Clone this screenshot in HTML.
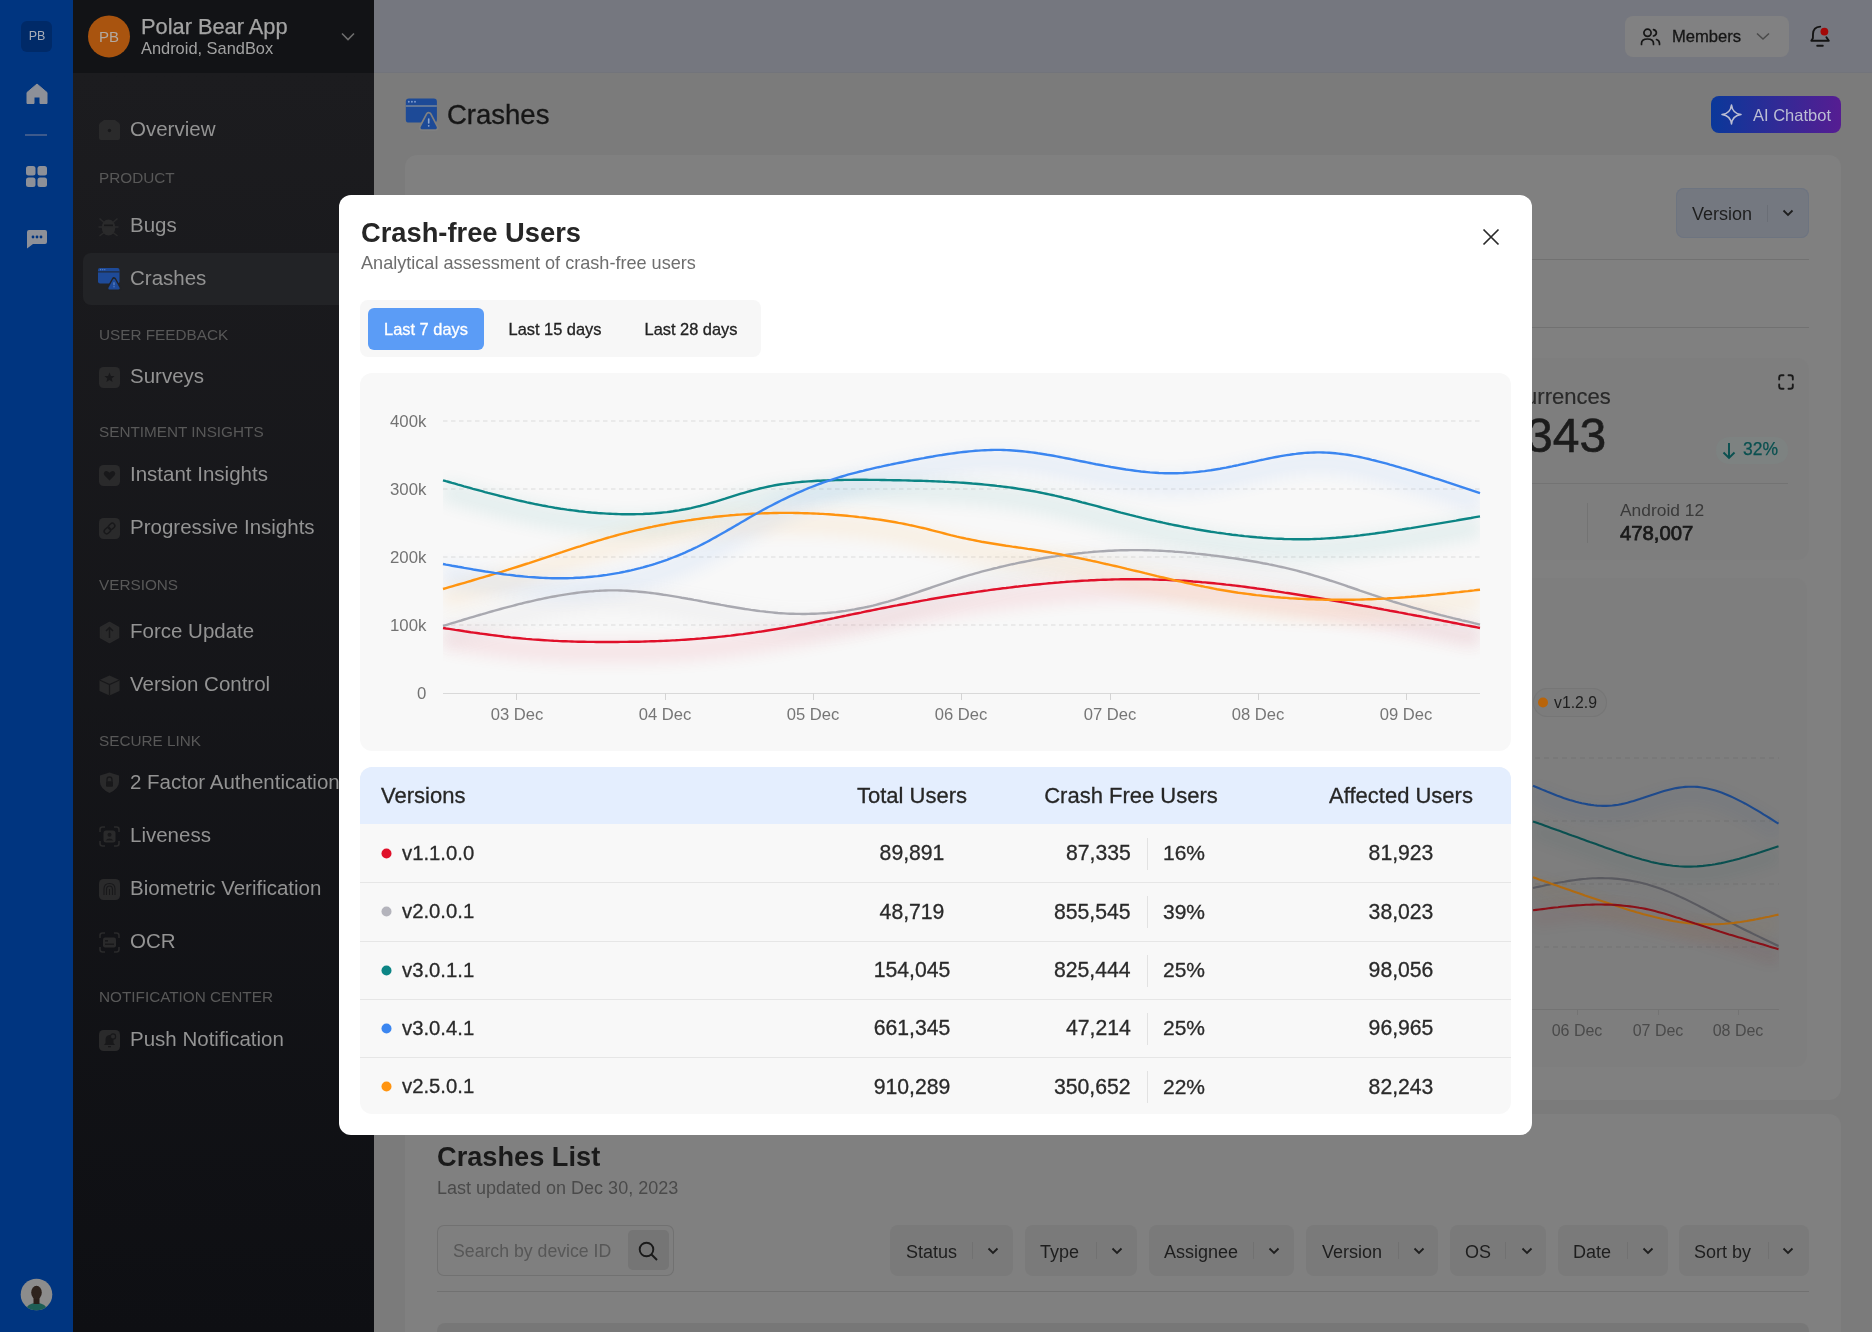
<!DOCTYPE html><html><head><meta charset="utf-8"><style>
html,body{margin:0;padding:0;width:1872px;height:1332px;overflow:hidden;position:relative;font-family:"Liberation Sans",sans-serif;background:#7b7b7b}
.t{position:absolute;white-space:nowrap;line-height:1;will-change:transform}
svg{overflow:visible}
</style></head><body>
<div style="position:absolute;left:0px;top:0px;width:73px;height:1332px;background:#003580;border-radius:0px;"></div>
<div style="position:absolute;left:21px;top:21px;width:31px;height:31px;background:#002a68;border-radius:6px;"></div>
<div class="t" style="left:36.5px;transform:translateX(-50%);top:30.4px;font-size:12.5px;color:#a8adb8;font-weight:400;letter-spacing:0px;">PB</div>
<svg style="position:absolute;left:26px;top:83px;" width="22" height="22" viewBox="0 0 22 22"><path d="M11,1 L21,9.5 L21,20.5 L14,20.5 L14,14 L8,14 L8,20.5 L1,20.5 L1,9.5 Z" fill="#8d9098" stroke="#8d9098" stroke-width="1" stroke-linejoin="round"/></svg>
<div style="position:absolute;left:25px;top:134px;width:22px;height:1.5px;background:#3d5a8c;border-radius:0px;"></div>
<svg style="position:absolute;left:26px;top:166px;" width="22" height="22" viewBox="0 0 22 22"><rect x="0" y="0" width="9.5" height="9.5" rx="2.5" fill="#8d9098"/><rect x="0" y="11.5" width="9.5" height="9.5" rx="2.5" fill="#8d9098"/><rect x="11.5" y="0" width="9.5" height="9.5" rx="2.5" fill="#8d9098"/><rect x="11.5" y="11.5" width="9.5" height="9.5" rx="2.5" fill="#8d9098"/></svg>
<svg style="position:absolute;left:26px;top:229px;" width="22" height="20" viewBox="0 0 22 20"><path d="M3,1 H19 Q21,1 21,3 V13 Q21,15 19,15 H7 L1,19.5 V3 Q1,1 3,1 Z" fill="#8d9098"/><circle cx="7" cy="8" r="1.4" fill="#003580"/><circle cx="11" cy="8" r="1.4" fill="#003580"/><circle cx="15" cy="8" r="1.4" fill="#003580"/></svg>
<svg style="position:absolute;left:20px;top:1278px;" width="33" height="33" viewBox="0 0 33 33"><defs><clipPath id="av"><circle cx="16.5" cy="16.5" r="15.8"/></clipPath></defs><g clip-path="url(#av)"><rect width="33" height="33" fill="#8c8c8c"/><path d="M5,33 Q7,25 16.5,25 Q26,25 28,33 Z" fill="#1d5e55"/><rect x="13.5" y="20" width="6" height="6" fill="#2a1f1a"/><ellipse cx="16.5" cy="14.5" rx="5.3" ry="6.8" fill="#2e231d"/></g></svg>
<div style="position:absolute;left:73px;top:0px;width:301px;height:73px;background:#121316;border-radius:0px;"></div>
<div style="position:absolute;left:73px;top:73px;width:301px;height:1259px;background:linear-gradient(#1c1c1f,#0e0f13);border-radius:0px;"></div>
<svg style="position:absolute;left:88px;top:15px;" width="43" height="43" viewBox="0 0 43 43"><circle cx="21" cy="21.4" r="21" fill="#a9540f"/></svg>
<div class="t" style="left:109.0px;transform:translateX(-50%);top:29.3px;font-size:15px;color:#b3aaa2;font-weight:400;letter-spacing:0px;">PB</div>
<div class="t" style="left:140.5px;top:16.3px;font-size:21.8px;color:#a4a4a4;font-weight:400;letter-spacing:0px;-webkit-text-stroke:0.25px #a4a4a4;">Polar Bear App</div>
<div class="t" style="left:140.5px;top:40.1px;font-size:16.4px;color:#a2a2a2;font-weight:400;letter-spacing:0px;">Android, SandBox</div>
<svg style="position:absolute;left:340px;top:30px;" width="16" height="12" viewBox="0 0 16 12"><path d="M2,3.5 L8,9.5 L14,3.5" fill="none" stroke="#6e6e6e" stroke-width="1.6"/></svg>
<div style="position:absolute;left:83px;top:253px;width:290px;height:52px;background:#222326;border-radius:8px;"></div>
<div class="t" style="left:130.3px;top:119.1px;font-size:20.5px;color:#939393;font-weight:400;letter-spacing:0px;">Overview</div>
<svg style="position:absolute;left:98.8px;top:119.80000000000001px;" width="21" height="21" viewBox="0 0 21 21"><path d="M0,5 Q0,3.5 1.5,2.5 L5,0 H16 L19.5,2.5 Q21,3.5 21,5 V18 Q21,20 19,20 H2 Q0,20 0,18 Z" fill="#2a2a2b"/><circle cx="10.5" cy="10.5" r="1.7" fill="#18181a"/></svg>
<div class="t" style="left:99.3px;top:170.3px;font-size:15.3px;color:#585858;font-weight:400;letter-spacing:0px;">PRODUCT</div>
<div class="t" style="left:130.3px;top:215.1px;font-size:20.5px;color:#939393;font-weight:400;letter-spacing:0px;">Bugs</div>
<svg style="position:absolute;left:98px;top:215.8px;" width="22" height="22" viewBox="0 0 22 22"><ellipse cx="10.5" cy="11.5" rx="6.8" ry="8" fill="#2a2a2b"/><path d="M0.5,11 H20.5 M1.5,2.5 L6,6.5 M19.5,2.5 L15,6.5 M1.5,20 L6,16.5 M19.5,20 L15,16.5" stroke="#2a2a2b" stroke-width="1.5"/><rect x="6" y="8.5" width="9" height="1.6" fill="#18181a"/></svg>
<div class="t" style="left:130.3px;top:268.3px;font-size:20.5px;color:#939393;font-weight:400;letter-spacing:0px;">Crashes</div>
<svg style="position:absolute;left:98px;top:268.0px;" width="23" height="23" viewBox="0 0 23 23"><rect x="0" y="0" width="21.5" height="15.5" rx="2" fill="#1e4a98"/><rect x="0" y="3.4" width="21.5" height="1" fill="#222326"/><circle cx="2.6" cy="1.7" r="0.6" fill="#5f86c9"/><circle cx="4.7" cy="1.7" r="0.6" fill="#5f86c9"/><circle cx="6.8" cy="1.7" r="0.6" fill="#5f86c9"/><path d="M16,11.5 L21,20.5 H11 Z" fill="#222326" stroke="#222326" stroke-width="4.6" stroke-linejoin="round"/><path d="M16,12 L20.5,20.3 H11.5 Z" fill="#1e4a98" stroke="#1e4a98" stroke-width="2.4" stroke-linejoin="round"/><rect x="15.4" y="14.3" width="1.2" height="3" fill="#5f86c9"/><rect x="15.4" y="18.2" width="1.2" height="1.1" fill="#5f86c9"/></svg>
<div class="t" style="left:99.3px;top:326.5px;font-size:15.3px;color:#585858;font-weight:400;letter-spacing:0px;">USER FEEDBACK</div>
<div class="t" style="left:130.3px;top:366.3px;font-size:20.5px;color:#939393;font-weight:400;letter-spacing:0px;">Surveys</div>
<svg style="position:absolute;left:98.8px;top:367.0px;" width="21" height="21" viewBox="0 0 21 21"><rect x="0" y="0" width="21" height="21" rx="4.5" fill="#2a2a2b"/><path d="M10.5,5.5 L11.9,8.9 L15.5,9.1 L12.7,11.4 L13.6,14.9 L10.5,13 L7.4,14.9 L8.3,11.4 L5.5,9.1 L9.1,8.9 Z" fill="#18181a"/></svg>
<div class="t" style="left:99.3px;top:424.1px;font-size:15.3px;color:#585858;font-weight:400;letter-spacing:0px;">SENTIMENT INSIGHTS</div>
<div class="t" style="left:130.3px;top:464.2px;font-size:20.5px;color:#939393;font-weight:400;letter-spacing:0px;">Instant Insights</div>
<svg style="position:absolute;left:98.8px;top:464.90000000000003px;" width="21" height="21" viewBox="0 0 21 21"><rect x="0" y="0" width="21" height="21" rx="4.5" fill="#2a2a2b"/><path d="M10.5,15.5 L5.5,10.5 Q4,8.5 5.5,6.8 Q7.5,5 10.5,7.8 Q13.5,5 15.5,6.8 Q17,8.5 15.5,10.5 Z" fill="#18181a"/></svg>
<div class="t" style="left:130.3px;top:517.3px;font-size:20.5px;color:#939393;font-weight:400;letter-spacing:0px;">Progressive Insights</div>
<svg style="position:absolute;left:98.8px;top:518.0px;" width="21" height="21" viewBox="0 0 21 21"><rect x="0" y="0" width="21" height="21" rx="4.5" fill="#2a2a2b"/><g transform="rotate(-45 10.5 10.5)" fill="none" stroke="#18181a" stroke-width="1.4"><rect x="4" y="8" width="7" height="5" rx="2.5"/><rect x="10" y="8" width="7" height="5" rx="2.5"/></g></svg>
<div class="t" style="left:99.3px;top:577.0px;font-size:15.3px;color:#585858;font-weight:400;letter-spacing:0px;">VERSIONS</div>
<div class="t" style="left:130.3px;top:620.9px;font-size:20.5px;color:#939393;font-weight:400;letter-spacing:0px;">Force Update</div>
<svg style="position:absolute;left:98.8px;top:621.5999999999999px;" width="21" height="21" viewBox="0 0 21 21"><path d="M10.5,0.5 L19.5,5.5 V15.5 L10.5,20.5 L1.5,15.5 V5.5 Z" fill="#2a2a2b" stroke="#2a2a2b" stroke-width="1.5" stroke-linejoin="round"/><path d="M10.5,16 V5.5 M7,9 L10.5,5.5 L14,9" stroke="#18181a" stroke-width="1.5" fill="none"/></svg>
<div class="t" style="left:130.3px;top:674.3px;font-size:20.5px;color:#939393;font-weight:400;letter-spacing:0px;">Version Control</div>
<svg style="position:absolute;left:98.8px;top:675.0px;" width="21" height="21" viewBox="0 0 21 21"><path d="M10.5,0.5 L20.5,5 V16 L10.5,20.5 L0.5,16 V5 Z" fill="#2a2a2b"/><path d="M0.5,5 L10.5,9.5 L20.5,5 M10.5,9.5 V20.5" stroke="#18181a" stroke-width="1.2" fill="none"/></svg>
<div class="t" style="left:99.3px;top:732.5px;font-size:15.3px;color:#585858;font-weight:400;letter-spacing:0px;">SECURE LINK</div>
<div class="t" style="left:130.3px;top:771.6px;font-size:20.5px;color:#939393;font-weight:400;letter-spacing:0px;">2 Factor Authentication</div>
<svg style="position:absolute;left:98.8px;top:772.3px;" width="21" height="21" viewBox="0 0 21 21"><path d="M10.5,0.5 L20,3.5 V10 Q20,16.5 10.5,21 Q1,16.5 1,10 V3.5 Z" fill="#2a2a2b"/><path d="M8,9.5 V7.5 Q8,5 10.5,5 Q13,5 13,7.5 V9.5" fill="none" stroke="#18181a" stroke-width="1.3"/><rect x="7" y="9.3" width="7" height="5.5" rx="1" fill="#18181a"/></svg>
<div class="t" style="left:130.3px;top:825.1px;font-size:20.5px;color:#939393;font-weight:400;letter-spacing:0px;">Liveness</div>
<svg style="position:absolute;left:98.8px;top:825.8px;" width="21" height="21" viewBox="0 0 21 21"><path d="M1,6 V3.5 Q1,1 3.5,1 H6 M15,1 H17.5 Q20,1 20,3.5 V6 M20,15 V17.5 Q20,20 17.5,20 H15 M6,20 H3.5 Q1,20 1,17.5 V15" stroke="#2a2a2b" stroke-width="1.6" fill="none"/><rect x="4.5" y="4.5" width="12" height="12" rx="2.5" fill="#2a2a2b"/><circle cx="10.5" cy="8.8" r="2" fill="#18181a"/><path d="M6.5,14.5 Q10.5,10.5 14.5,14.5" fill="#18181a"/></svg>
<div class="t" style="left:130.3px;top:878.3px;font-size:20.5px;color:#939393;font-weight:400;letter-spacing:0px;">Biometric Verification</div>
<svg style="position:absolute;left:98.8px;top:879.0px;" width="21" height="21" viewBox="0 0 21 21"><rect x="0" y="0" width="21" height="21" rx="4.5" fill="#2a2a2b"/><g fill="none" stroke="#18181a" stroke-width="1.1"><path d="M5,16 V10 Q5,4.5 10.5,4.5 Q16,4.5 16,10 V16"/><path d="M7.5,16 V10.5 Q7.5,7 10.5,7 Q13.5,7 13.5,10.5 V16"/><path d="M10.5,16 V10"/></g></svg>
<div class="t" style="left:130.3px;top:931.4px;font-size:20.5px;color:#939393;font-weight:400;letter-spacing:0px;">OCR</div>
<svg style="position:absolute;left:98.8px;top:932.0999999999999px;" width="21" height="21" viewBox="0 0 21 21"><path d="M1,6 V3.5 Q1,1 3.5,1 H6 M15,1 H17.5 Q20,1 20,3.5 V6 M20,15 V17.5 Q20,20 17.5,20 H15 M6,20 H3.5 Q1,20 1,17.5 V15" stroke="#2a2a2b" stroke-width="1.6" fill="none"/><rect x="4" y="5.5" width="13" height="10" rx="2" fill="#2a2a2b"/><rect x="6" y="8" width="3" height="1.6" fill="#18181a"/><rect x="6" y="11.5" width="9" height="1.4" fill="#18181a"/></svg>
<div class="t" style="left:99.3px;top:989.3px;font-size:15.3px;color:#585858;font-weight:400;letter-spacing:0px;">NOTIFICATION CENTER</div>
<div class="t" style="left:130.3px;top:1029.0px;font-size:20.5px;color:#939393;font-weight:400;letter-spacing:0px;">Push Notification</div>
<svg style="position:absolute;left:98.8px;top:1029.7px;" width="21" height="21" viewBox="0 0 21 21"><rect x="0" y="0" width="21" height="21" rx="4.5" fill="#2a2a2b"/><path d="M10.5,5 Q6.5,5.5 6.5,10 V13 L5,15 H16 L14.5,13 V10 Q14.5,5.5 10.5,5 Z" fill="#18181a"/><circle cx="14" cy="6.5" r="2.6" fill="#2a2a2b" stroke="#18181a" stroke-width="1.2"/><rect x="9" y="16" width="3" height="1.3" fill="#18181a"/></svg>
<div style="position:absolute;left:374px;top:0px;width:1498px;height:73px;background:#75777f;border-radius:0px;"></div>
<div style="position:absolute;left:374px;top:72px;width:1498px;height:1px;background:#72747b;border-radius:0px;"></div>
<div style="position:absolute;left:1625px;top:16px;width:164px;height:41px;background:#818182;border-radius:8px;"></div>
<svg style="position:absolute;left:1640px;top:27px;" width="23" height="20" viewBox="0 0 23 20"><circle cx="7.5" cy="5.8" r="3.6" fill="none" stroke="#161616" stroke-width="1.7"/><path d="M1.5,17.5 V16.5 Q1.5,12 7.5,12 Q13.5,12 13.5,16.5 V17.5" fill="none" stroke="#161616" stroke-width="1.7" stroke-linecap="round"/><path d="M13.5,2.6 Q16.4,3.4 16.4,5.8 Q16.4,8.2 13.5,9" fill="none" stroke="#161616" stroke-width="1.7" stroke-linecap="round"/><path d="M16.5,12.5 Q19.5,13.5 19.5,16.5 V17.5" fill="none" stroke="#161616" stroke-width="1.7" stroke-linecap="round"/></svg>
<div class="t" style="left:1672.0px;top:28.7px;font-size:16.6px;color:#161616;font-weight:400;letter-spacing:0px;-webkit-text-stroke:0.3px #161616;">Members</div>
<svg style="position:absolute;left:1755px;top:31px;" width="16" height="10" viewBox="0 0 16 10"><path d="M2,2.5 L8,8 L14,2.5" fill="none" stroke="#4a4a4a" stroke-width="1.5"/></svg>
<svg style="position:absolute;left:1808px;top:24px;" width="26" height="26" viewBox="0 0 26 26"><path d="M12.2,2.6 Q5.3,3 5,10 L4.9,14.3 L3.3,16.8 H20.8 L18.4,13.3" fill="none" stroke="#141414" stroke-width="1.9" stroke-linejoin="round" stroke-linecap="round"/><path d="M9.2,21.7 H14.8" stroke="#141414" stroke-width="1.9" stroke-linecap="round"/><circle cx="16.4" cy="7.6" r="3.9" fill="#a30808"/></svg>
<div style="position:absolute;left:405px;top:155px;width:1436px;height:945px;background:#808080;border-radius:12px;"></div>
<svg style="position:absolute;left:405px;top:98px;" width="34" height="34" viewBox="0 0 34 34"><rect x="0.8" y="0.4" width="31.1" height="24.2" rx="3.2" fill="#1d4a97"/><rect x="0.8" y="7.3" width="31.1" height="1.4" fill="#7f8a9a"/><circle cx="3.8" cy="3.8" r="0.95" fill="#7f9ccf"/><circle cx="6.9" cy="3.8" r="0.95" fill="#7f9ccf"/><circle cx="10" cy="3.8" r="0.95" fill="#7f9ccf"/><path d="M23.7,17 L30.4,29.7 H17 Z" fill="#808080" stroke="#808080" stroke-width="6.4" stroke-linejoin="round"/><path d="M23.7,17 L30.4,29.7 H17 Z" fill="#1d4a97" stroke="#1d4a97" stroke-width="3" stroke-linejoin="round"/><rect x="22.9" y="20.2" width="1.6" height="5.6" rx="0.8" fill="#8ea6d0"/><circle cx="23.7" cy="27.8" r="0.9" fill="#8ea6d0"/></svg>
<div class="t" style="left:447.4px;top:101.3px;font-size:27.5px;color:#161616;font-weight:400;letter-spacing:0px;-webkit-text-stroke:0.35px #161616;">Crashes</div>
<div style="position:absolute;left:1711px;top:96px;width:130px;height:37px;background:linear-gradient(90deg,#0a389a,#561d92);border-radius:8px;"></div>
<svg style="position:absolute;left:1721px;top:104px;" width="21" height="21" viewBox="0 0 21 21"><path d="M10.5,1 Q11.5,9.5 20,10.5 Q11.5,11.5 10.5,20 Q9.5,11.5 1,10.5 Q9.5,9.5 10.5,1 Z" fill="none" stroke="#bcbfd4" stroke-width="1.6" stroke-linejoin="round"/></svg>
<div class="t" style="left:1752.8px;top:106.7px;font-size:16.5px;color:#bcbfd4;font-weight:400;letter-spacing:0px;">AI Chatbot</div>
<div style="position:absolute;left:1676px;top:188px;width:133px;height:50px;background:#747880;border-radius:8px;box-shadow:inset 0 0 0 1px #6d7480;"></div>
<div class="t" style="left:1692.0px;top:204.8px;font-size:18px;color:#1e1e1e;font-weight:400;letter-spacing:0px;">Version</div>
<div style="position:absolute;left:1767px;top:205px;width:1px;height:17px;background:#6a6e76;border-radius:0px;"></div>
<svg style="position:absolute;left:1781px;top:208px;" width="14" height="10" viewBox="0 0 14 10"><path d="M2.5,2.5 L7,7 L11.5,2.5" fill="none" stroke="#1e1e1e" stroke-width="1.8"/></svg>
<div style="position:absolute;left:437px;top:259px;width:1372px;height:1.3px;background:#717171;border-radius:0px;"></div>
<div style="position:absolute;left:437px;top:327px;width:1372px;height:1.3px;background:#717171;border-radius:0px;"></div>
<div style="position:absolute;left:437px;top:358px;width:1372px;height:202px;background:#7e7e7e;border-radius:12px;"></div>
<div class="t" style="right:261.5px;top:385.8px;font-size:22px;color:#2a2a2a;font-weight:400;letter-spacing:0px;-webkit-text-stroke:0.2px #2a2a2a;">Occurrences</div>
<div class="t" style="right:266.0px;top:412.0px;font-size:48px;color:#1c1c1c;font-weight:400;letter-spacing:0px;-webkit-text-stroke:0.6px #1c1c1c;">343</div>
<div style="position:absolute;left:1716px;top:437px;width:72px;height:27px;background:#7d8281;border-radius:13px;"></div>
<svg style="position:absolute;left:1721px;top:441px;" width="16" height="20" viewBox="0 0 16 20"><path d="M8,2 V17 M2.5,11.5 L8,17 L13.5,11.5" fill="none" stroke="#0a5050" stroke-width="1.9"/></svg>
<div class="t" style="left:1742.6px;top:441.2px;font-size:17.5px;color:#0a5050;font-weight:400;letter-spacing:0px;-webkit-text-stroke:0.25px #0a5050;">32%</div>
<svg style="position:absolute;left:1778px;top:374px;" width="17" height="17" viewBox="0 0 17 17"><path d="M1.2,5.5 V3.5 Q1.2,1.2 3.5,1.2 H5.5 M10.5,1.2 H12.5 Q14.8,1.2 14.8,3.5 V5.5 M14.8,10.5 V12.5 Q14.8,14.8 12.5,14.8 H10.5 M5.5,14.8 H3.5 Q1.2,14.8 1.2,12.5 V10.5" fill="none" stroke="#1a1a1a" stroke-width="1.9" stroke-linecap="round"/></svg>
<div style="position:absolute;left:437px;top:483px;width:1351px;height:1.2px;background:#737373;border-radius:0px;"></div>
<div style="position:absolute;left:1587px;top:503px;width:1.2px;height:40px;background:#737373;border-radius:0px;"></div>
<div class="t" style="left:1619.5px;top:501.5px;font-size:17.4px;color:#3a3a3a;font-weight:400;letter-spacing:0px;">Android 12</div>
<div class="t" style="left:1619.5px;top:523.0px;font-size:20.3px;color:#1a1a1a;font-weight:400;letter-spacing:0px;-webkit-text-stroke:0.75px #1a1a1a;">478,007</div>
<div style="position:absolute;left:437px;top:578px;width:1370px;height:489px;background:#7e7e7e;border-radius:12px;"></div>
<div style="position:absolute;left:1533px;top:688px;width:74px;height:29px;background:#7c7c7c;border-radius:15px;box-shadow:inset 0 0 0 1px #767676;"></div>
<svg style="position:absolute;left:1537px;top:697px;" width="12" height="12" viewBox="0 0 12 12"><circle cx="6" cy="5.5" r="5" fill="#b8640a"/></svg>
<div class="t" style="left:1553.8px;top:694.6px;font-size:15.8px;color:#1e1e1e;font-weight:400;letter-spacing:0px;">v1.2.9</div>
<svg style="position:absolute;left:437px;top:757.3px;" width="1342" height="2" viewBox="0 0 1342 2"><line x1="0" y1="1" x2="1342" y2="1" stroke="#727272" stroke-width="1" stroke-dasharray="5 4"/></svg>
<svg style="position:absolute;left:437px;top:820.4px;" width="1342" height="2" viewBox="0 0 1342 2"><line x1="0" y1="1" x2="1342" y2="1" stroke="#727272" stroke-width="1" stroke-dasharray="5 4"/></svg>
<svg style="position:absolute;left:437px;top:883.2px;" width="1342" height="2" viewBox="0 0 1342 2"><line x1="0" y1="1" x2="1342" y2="1" stroke="#727272" stroke-width="1" stroke-dasharray="5 4"/></svg>
<svg style="position:absolute;left:437px;top:946px;" width="1342" height="2" viewBox="0 0 1342 2"><line x1="0" y1="1" x2="1342" y2="1" stroke="#727272" stroke-width="1" stroke-dasharray="5 4"/></svg>
<div style="position:absolute;left:437px;top:1009px;width:1342px;height:1.2px;background:#737373;border-radius:0px;"></div>
<div style="position:absolute;left:1577.3px;top:1009px;width:1px;height:6px;background:#737373;border-radius:0px;"></div>
<div class="t" style="left:1577.3px;transform:translateX(-50%);top:1023.3px;font-size:16px;color:#4a4a4a;font-weight:400;letter-spacing:0px;">06 Dec</div>
<div style="position:absolute;left:1657.9px;top:1009px;width:1px;height:6px;background:#737373;border-radius:0px;"></div>
<div class="t" style="left:1657.9px;transform:translateX(-50%);top:1023.3px;font-size:16px;color:#4a4a4a;font-weight:400;letter-spacing:0px;">07 Dec</div>
<div style="position:absolute;left:1738.2px;top:1009px;width:1px;height:6px;background:#737373;border-radius:0px;"></div>
<div class="t" style="left:1738.2px;transform:translateX(-50%);top:1023.3px;font-size:16px;color:#4a4a4a;font-weight:400;letter-spacing:0px;">08 Dec</div>
<svg style="position:absolute;left:0px;top:0px;pointer-events:none;" width="1872" height="1332" viewBox="0 0 1872 1332"><defs><filter id="bl2" x="-20%" y="-50%" width="140%" height="200%"><feGaussianBlur stdDeviation="7"/></filter><clipPath id="rc"><rect x="1450" y="750" width="329" height="259"/></clipPath></defs><g clip-path="url(#rc)"><path d="M1533.0,785.7 L1536.0,787.0 L1539.1,788.3 L1542.2,789.6 L1545.2,790.8 L1548.2,792.1 L1551.3,793.3 L1554.3,794.5 L1557.4,795.7 L1560.5,796.8 L1563.5,797.9 L1566.5,798.9 L1569.6,799.9 L1572.7,800.8 L1575.7,801.7 L1578.8,802.5 L1581.8,803.2 L1584.8,803.8 L1587.9,804.4 L1591.0,804.9 L1594.0,805.3 L1597.0,805.6 L1600.1,805.8 L1603.1,805.9 L1606.2,805.9 L1609.2,805.7 L1612.3,805.5 L1615.3,805.1 L1618.4,804.7 L1621.4,804.1 L1624.5,803.4 L1627.5,802.7 L1630.5,801.8 L1633.6,801.0 L1636.6,800.0 L1639.7,799.1 L1642.7,798.1 L1645.7,797.0 L1648.8,796.0 L1651.8,795.0 L1654.9,794.0 L1657.9,793.0 L1660.9,792.0 L1664.0,791.1 L1667.0,790.3 L1670.1,789.5 L1673.1,788.8 L1676.1,788.1 L1679.2,787.6 L1682.2,787.2 L1685.3,786.9 L1688.3,786.7 L1691.3,786.7 L1694.3,786.7 L1697.3,786.9 L1700.3,787.3 L1703.3,787.7 L1706.3,788.3 L1709.3,788.9 L1712.4,789.7 L1715.4,790.6 L1718.4,791.6 L1721.4,792.6 L1724.4,793.7 L1727.4,795.0 L1730.4,796.3 L1733.4,797.6 L1736.4,799.1 L1739.4,800.6 L1742.4,802.1 L1745.4,803.7 L1748.4,805.4 L1751.4,807.1 L1754.4,808.8 L1757.5,810.6 L1760.5,812.4 L1763.5,814.3 L1766.5,816.1 L1769.5,818.0 L1772.5,819.9 L1775.5,821.8 L1778.5,823.7" fill="none" stroke="#1e4a8c" stroke-width="16" opacity="0.06" transform="translate(0,8)" filter="url(#bl2)"/><path d="M1533.0,821.4 L1536.0,822.5 L1539.0,823.6 L1542.0,824.6 L1545.0,825.7 L1548.0,826.8 L1551.0,827.9 L1554.0,829.0 L1557.0,830.1 L1560.0,831.1 L1563.0,832.2 L1566.0,833.3 L1569.0,834.4 L1572.0,835.5 L1575.0,836.5 L1578.0,837.6 L1581.0,838.7 L1584.0,839.8 L1587.0,840.9 L1590.0,842.0 L1593.0,843.0 L1596.0,844.1 L1599.0,845.2 L1602.1,846.3 L1605.1,847.4 L1608.2,848.5 L1611.3,849.6 L1614.4,850.7 L1617.4,851.8 L1620.5,852.8 L1623.6,853.8 L1626.6,854.9 L1629.7,855.8 L1632.8,856.8 L1635.9,857.7 L1638.9,858.6 L1642.0,859.5 L1645.1,860.3 L1648.1,861.1 L1651.2,861.9 L1654.3,862.6 L1657.4,863.2 L1660.4,863.9 L1663.5,864.4 L1666.6,864.9 L1669.6,865.3 L1672.7,865.7 L1675.8,866.0 L1678.9,866.3 L1681.9,866.5 L1685.0,866.6 L1688.0,866.6 L1691.0,866.6 L1694.0,866.5 L1697.1,866.4 L1700.1,866.1 L1703.1,865.9 L1706.1,865.5 L1709.1,865.1 L1712.1,864.7 L1715.2,864.2 L1718.2,863.6 L1721.2,863.1 L1724.2,862.4 L1727.2,861.7 L1730.2,861.0 L1733.3,860.3 L1736.3,859.5 L1739.3,858.7 L1742.3,857.8 L1745.3,857.0 L1748.3,856.1 L1751.4,855.1 L1754.4,854.2 L1757.4,853.2 L1760.4,852.3 L1763.4,851.3 L1766.4,850.3 L1769.5,849.3 L1772.5,848.2 L1775.5,847.2 L1778.5,846.2" fill="none" stroke="#0a5050" stroke-width="16" opacity="0.06" transform="translate(0,8)" filter="url(#bl2)"/><path d="M1533.0,888.0 L1536.1,887.3 L1539.3,886.6 L1542.4,886.0 L1545.6,885.3 L1548.7,884.6 L1551.8,884.0 L1555.0,883.4 L1558.1,882.8 L1561.3,882.2 L1564.4,881.7 L1567.5,881.1 L1570.7,880.6 L1573.8,880.2 L1577.0,879.8 L1580.1,879.4 L1583.2,879.0 L1586.4,878.8 L1589.5,878.5 L1592.7,878.3 L1595.8,878.2 L1598.9,878.1 L1602.1,878.1 L1605.2,878.2 L1608.4,878.3 L1611.5,878.4 L1614.6,878.6 L1617.8,878.9 L1620.9,879.2 L1624.1,879.6 L1627.2,880.1 L1630.3,880.6 L1633.5,881.2 L1636.6,881.8 L1639.8,882.5 L1642.9,883.3 L1646.0,884.1 L1649.2,885.0 L1652.3,885.9 L1655.5,886.9 L1658.6,888.0 L1661.6,889.1 L1664.6,890.2 L1667.6,891.4 L1670.7,892.6 L1673.7,893.9 L1676.7,895.2 L1679.7,896.6 L1682.7,898.0 L1685.8,899.4 L1688.8,900.9 L1691.8,902.4 L1694.8,903.9 L1697.8,905.4 L1700.8,907.0 L1703.8,908.5 L1706.9,910.1 L1709.9,911.7 L1712.9,913.3 L1715.9,914.9 L1718.9,916.5 L1722.0,918.1 L1725.0,919.7 L1728.0,921.2 L1731.0,922.8 L1734.2,924.4 L1737.3,926.0 L1740.5,927.6 L1743.7,929.2 L1746.8,930.8 L1750.0,932.3 L1753.2,933.9 L1756.3,935.4 L1759.5,936.9 L1762.7,938.5 L1765.8,940.0 L1769.0,941.5 L1772.2,943.0 L1775.3,944.5 L1778.5,946.0" fill="none" stroke="#5a5a60" stroke-width="16" opacity="0.06" transform="translate(0,8)" filter="url(#bl2)"/><path d="M1533.0,877.2 L1536.0,878.3 L1539.1,879.4 L1542.2,880.4 L1545.2,881.5 L1548.2,882.6 L1551.3,883.7 L1554.3,884.8 L1557.4,885.8 L1560.5,886.9 L1563.5,888.0 L1566.5,889.1 L1569.6,890.1 L1572.7,891.2 L1575.7,892.2 L1578.8,893.3 L1581.8,894.3 L1584.8,895.4 L1587.9,896.4 L1591.0,897.5 L1594.0,898.5 L1597.0,899.5 L1600.1,900.6 L1603.1,901.6 L1606.2,902.6 L1609.2,903.6 L1612.3,904.6 L1615.3,905.6 L1618.4,906.6 L1621.4,907.5 L1624.4,908.5 L1627.4,909.4 L1630.5,910.4 L1633.5,911.3 L1636.5,912.2 L1639.6,913.0 L1642.6,913.9 L1645.6,914.7 L1648.7,915.5 L1651.7,916.3 L1654.7,917.1 L1657.7,917.8 L1660.8,918.5 L1663.8,919.2 L1666.8,919.8 L1669.9,920.4 L1672.9,921.0 L1675.9,921.5 L1678.9,922.0 L1682.0,922.4 L1685.0,922.8 L1688.0,923.2 L1691.1,923.5 L1694.1,923.7 L1697.2,923.9 L1700.2,924.1 L1703.3,924.2 L1706.3,924.3 L1709.4,924.4 L1712.4,924.3 L1715.5,924.3 L1718.5,924.2 L1721.6,924.0 L1724.6,923.8 L1727.8,923.5 L1730.9,923.2 L1734.1,922.9 L1737.3,922.4 L1740.5,922.0 L1743.6,921.5 L1746.8,921.0 L1750.0,920.4 L1753.1,919.9 L1756.3,919.3 L1759.5,918.6 L1762.6,918.0 L1765.8,917.3 L1769.0,916.7 L1772.2,916.0 L1775.3,915.3 L1778.5,914.6" fill="none" stroke="#b06a10" stroke-width="16" opacity="0.06" transform="translate(0,8)" filter="url(#bl2)"/><path d="M1533.0,910.3 L1536.1,909.9 L1539.3,909.5 L1542.4,909.1 L1545.5,908.7 L1548.7,908.3 L1551.8,907.9 L1554.9,907.5 L1558.1,907.2 L1561.2,906.8 L1564.3,906.5 L1567.4,906.2 L1570.6,905.9 L1573.7,905.6 L1576.8,905.4 L1580.0,905.2 L1583.1,905.0 L1586.2,904.8 L1589.4,904.7 L1592.5,904.6 L1595.6,904.5 L1598.7,904.5 L1601.9,904.5 L1605.0,904.6 L1608.1,904.6 L1611.2,904.8 L1614.4,904.9 L1617.5,905.1 L1620.6,905.4 L1623.7,905.7 L1626.8,906.0 L1630.0,906.4 L1633.1,906.8 L1636.2,907.2 L1639.3,907.8 L1642.5,908.3 L1645.6,908.9 L1648.7,909.6 L1651.8,910.3 L1654.9,911.1 L1658.0,911.9 L1661.1,912.7 L1664.2,913.6 L1667.3,914.5 L1670.4,915.4 L1673.5,916.4 L1676.5,917.4 L1679.6,918.3 L1682.7,919.4 L1685.8,920.4 L1688.9,921.4 L1692.0,922.4 L1695.1,923.5 L1698.2,924.5 L1701.3,925.5 L1704.4,926.5 L1707.5,927.5 L1710.6,928.5 L1713.6,929.5 L1716.7,930.5 L1719.8,931.5 L1722.9,932.4 L1726.0,933.4 L1729.1,934.4 L1732.2,935.3 L1735.3,936.3 L1738.3,937.2 L1741.4,938.1 L1744.5,939.1 L1747.6,940.0 L1750.7,940.9 L1753.8,941.9 L1756.9,942.8 L1760.0,943.7 L1763.1,944.6 L1766.1,945.5 L1769.2,946.5 L1772.3,947.4 L1775.4,948.3 L1778.5,949.2" fill="none" stroke="#8a1018" stroke-width="16" opacity="0.06" transform="translate(0,8)" filter="url(#bl2)"/></g><path d="M1533.0,785.7 L1536.0,787.0 L1539.1,788.3 L1542.2,789.6 L1545.2,790.8 L1548.2,792.1 L1551.3,793.3 L1554.3,794.5 L1557.4,795.7 L1560.5,796.8 L1563.5,797.9 L1566.5,798.9 L1569.6,799.9 L1572.7,800.8 L1575.7,801.7 L1578.8,802.5 L1581.8,803.2 L1584.8,803.8 L1587.9,804.4 L1591.0,804.9 L1594.0,805.3 L1597.0,805.6 L1600.1,805.8 L1603.1,805.9 L1606.2,805.9 L1609.2,805.7 L1612.3,805.5 L1615.3,805.1 L1618.4,804.7 L1621.4,804.1 L1624.5,803.4 L1627.5,802.7 L1630.5,801.8 L1633.6,801.0 L1636.6,800.0 L1639.7,799.1 L1642.7,798.1 L1645.7,797.0 L1648.8,796.0 L1651.8,795.0 L1654.9,794.0 L1657.9,793.0 L1660.9,792.0 L1664.0,791.1 L1667.0,790.3 L1670.1,789.5 L1673.1,788.8 L1676.1,788.1 L1679.2,787.6 L1682.2,787.2 L1685.3,786.9 L1688.3,786.7 L1691.3,786.7 L1694.3,786.7 L1697.3,786.9 L1700.3,787.3 L1703.3,787.7 L1706.3,788.3 L1709.3,788.9 L1712.4,789.7 L1715.4,790.6 L1718.4,791.6 L1721.4,792.6 L1724.4,793.7 L1727.4,795.0 L1730.4,796.3 L1733.4,797.6 L1736.4,799.1 L1739.4,800.6 L1742.4,802.1 L1745.4,803.7 L1748.4,805.4 L1751.4,807.1 L1754.4,808.8 L1757.5,810.6 L1760.5,812.4 L1763.5,814.3 L1766.5,816.1 L1769.5,818.0 L1772.5,819.9 L1775.5,821.8 L1778.5,823.7" fill="none" stroke="#1e4a8c" stroke-width="2.1"/><path d="M1533.0,821.4 L1536.0,822.5 L1539.0,823.6 L1542.0,824.6 L1545.0,825.7 L1548.0,826.8 L1551.0,827.9 L1554.0,829.0 L1557.0,830.1 L1560.0,831.1 L1563.0,832.2 L1566.0,833.3 L1569.0,834.4 L1572.0,835.5 L1575.0,836.5 L1578.0,837.6 L1581.0,838.7 L1584.0,839.8 L1587.0,840.9 L1590.0,842.0 L1593.0,843.0 L1596.0,844.1 L1599.0,845.2 L1602.1,846.3 L1605.1,847.4 L1608.2,848.5 L1611.3,849.6 L1614.4,850.7 L1617.4,851.8 L1620.5,852.8 L1623.6,853.8 L1626.6,854.9 L1629.7,855.8 L1632.8,856.8 L1635.9,857.7 L1638.9,858.6 L1642.0,859.5 L1645.1,860.3 L1648.1,861.1 L1651.2,861.9 L1654.3,862.6 L1657.4,863.2 L1660.4,863.9 L1663.5,864.4 L1666.6,864.9 L1669.6,865.3 L1672.7,865.7 L1675.8,866.0 L1678.9,866.3 L1681.9,866.5 L1685.0,866.6 L1688.0,866.6 L1691.0,866.6 L1694.0,866.5 L1697.1,866.4 L1700.1,866.1 L1703.1,865.9 L1706.1,865.5 L1709.1,865.1 L1712.1,864.7 L1715.2,864.2 L1718.2,863.6 L1721.2,863.1 L1724.2,862.4 L1727.2,861.7 L1730.2,861.0 L1733.3,860.3 L1736.3,859.5 L1739.3,858.7 L1742.3,857.8 L1745.3,857.0 L1748.3,856.1 L1751.4,855.1 L1754.4,854.2 L1757.4,853.2 L1760.4,852.3 L1763.4,851.3 L1766.4,850.3 L1769.5,849.3 L1772.5,848.2 L1775.5,847.2 L1778.5,846.2" fill="none" stroke="#0a5050" stroke-width="2.1"/><path d="M1533.0,888.0 L1536.1,887.3 L1539.3,886.6 L1542.4,886.0 L1545.6,885.3 L1548.7,884.6 L1551.8,884.0 L1555.0,883.4 L1558.1,882.8 L1561.3,882.2 L1564.4,881.7 L1567.5,881.1 L1570.7,880.6 L1573.8,880.2 L1577.0,879.8 L1580.1,879.4 L1583.2,879.0 L1586.4,878.8 L1589.5,878.5 L1592.7,878.3 L1595.8,878.2 L1598.9,878.1 L1602.1,878.1 L1605.2,878.2 L1608.4,878.3 L1611.5,878.4 L1614.6,878.6 L1617.8,878.9 L1620.9,879.2 L1624.1,879.6 L1627.2,880.1 L1630.3,880.6 L1633.5,881.2 L1636.6,881.8 L1639.8,882.5 L1642.9,883.3 L1646.0,884.1 L1649.2,885.0 L1652.3,885.9 L1655.5,886.9 L1658.6,888.0 L1661.6,889.1 L1664.6,890.2 L1667.6,891.4 L1670.7,892.6 L1673.7,893.9 L1676.7,895.2 L1679.7,896.6 L1682.7,898.0 L1685.8,899.4 L1688.8,900.9 L1691.8,902.4 L1694.8,903.9 L1697.8,905.4 L1700.8,907.0 L1703.8,908.5 L1706.9,910.1 L1709.9,911.7 L1712.9,913.3 L1715.9,914.9 L1718.9,916.5 L1722.0,918.1 L1725.0,919.7 L1728.0,921.2 L1731.0,922.8 L1734.2,924.4 L1737.3,926.0 L1740.5,927.6 L1743.7,929.2 L1746.8,930.8 L1750.0,932.3 L1753.2,933.9 L1756.3,935.4 L1759.5,936.9 L1762.7,938.5 L1765.8,940.0 L1769.0,941.5 L1772.2,943.0 L1775.3,944.5 L1778.5,946.0" fill="none" stroke="#5a5a60" stroke-width="2.1"/><path d="M1533.0,877.2 L1536.0,878.3 L1539.1,879.4 L1542.2,880.4 L1545.2,881.5 L1548.2,882.6 L1551.3,883.7 L1554.3,884.8 L1557.4,885.8 L1560.5,886.9 L1563.5,888.0 L1566.5,889.1 L1569.6,890.1 L1572.7,891.2 L1575.7,892.2 L1578.8,893.3 L1581.8,894.3 L1584.8,895.4 L1587.9,896.4 L1591.0,897.5 L1594.0,898.5 L1597.0,899.5 L1600.1,900.6 L1603.1,901.6 L1606.2,902.6 L1609.2,903.6 L1612.3,904.6 L1615.3,905.6 L1618.4,906.6 L1621.4,907.5 L1624.4,908.5 L1627.4,909.4 L1630.5,910.4 L1633.5,911.3 L1636.5,912.2 L1639.6,913.0 L1642.6,913.9 L1645.6,914.7 L1648.7,915.5 L1651.7,916.3 L1654.7,917.1 L1657.7,917.8 L1660.8,918.5 L1663.8,919.2 L1666.8,919.8 L1669.9,920.4 L1672.9,921.0 L1675.9,921.5 L1678.9,922.0 L1682.0,922.4 L1685.0,922.8 L1688.0,923.2 L1691.1,923.5 L1694.1,923.7 L1697.2,923.9 L1700.2,924.1 L1703.3,924.2 L1706.3,924.3 L1709.4,924.4 L1712.4,924.3 L1715.5,924.3 L1718.5,924.2 L1721.6,924.0 L1724.6,923.8 L1727.8,923.5 L1730.9,923.2 L1734.1,922.9 L1737.3,922.4 L1740.5,922.0 L1743.6,921.5 L1746.8,921.0 L1750.0,920.4 L1753.1,919.9 L1756.3,919.3 L1759.5,918.6 L1762.6,918.0 L1765.8,917.3 L1769.0,916.7 L1772.2,916.0 L1775.3,915.3 L1778.5,914.6" fill="none" stroke="#b06a10" stroke-width="2.1"/><path d="M1533.0,910.3 L1536.1,909.9 L1539.3,909.5 L1542.4,909.1 L1545.5,908.7 L1548.7,908.3 L1551.8,907.9 L1554.9,907.5 L1558.1,907.2 L1561.2,906.8 L1564.3,906.5 L1567.4,906.2 L1570.6,905.9 L1573.7,905.6 L1576.8,905.4 L1580.0,905.2 L1583.1,905.0 L1586.2,904.8 L1589.4,904.7 L1592.5,904.6 L1595.6,904.5 L1598.7,904.5 L1601.9,904.5 L1605.0,904.6 L1608.1,904.6 L1611.2,904.8 L1614.4,904.9 L1617.5,905.1 L1620.6,905.4 L1623.7,905.7 L1626.8,906.0 L1630.0,906.4 L1633.1,906.8 L1636.2,907.2 L1639.3,907.8 L1642.5,908.3 L1645.6,908.9 L1648.7,909.6 L1651.8,910.3 L1654.9,911.1 L1658.0,911.9 L1661.1,912.7 L1664.2,913.6 L1667.3,914.5 L1670.4,915.4 L1673.5,916.4 L1676.5,917.4 L1679.6,918.3 L1682.7,919.4 L1685.8,920.4 L1688.9,921.4 L1692.0,922.4 L1695.1,923.5 L1698.2,924.5 L1701.3,925.5 L1704.4,926.5 L1707.5,927.5 L1710.6,928.5 L1713.6,929.5 L1716.7,930.5 L1719.8,931.5 L1722.9,932.4 L1726.0,933.4 L1729.1,934.4 L1732.2,935.3 L1735.3,936.3 L1738.3,937.2 L1741.4,938.1 L1744.5,939.1 L1747.6,940.0 L1750.7,940.9 L1753.8,941.9 L1756.9,942.8 L1760.0,943.7 L1763.1,944.6 L1766.1,945.5 L1769.2,946.5 L1772.3,947.4 L1775.4,948.3 L1778.5,949.2" fill="none" stroke="#8a1018" stroke-width="2.1"/></svg>
<div style="position:absolute;left:405px;top:1114px;width:1436px;height:260px;background:#808080;border-radius:12px;"></div>
<div class="t" style="left:437.3px;top:1143.0px;font-size:27.2px;color:#1a1a1a;font-weight:700;letter-spacing:0px;">Crashes List</div>
<div class="t" style="left:437.3px;top:1178.8px;font-size:18px;color:#4a4a4a;font-weight:400;letter-spacing:0px;">Last updated on Dec 30, 2023</div>
<div style="position:absolute;left:437px;top:1225px;width:237px;height:51px;background:#7f7f7f;border-radius:7px;box-shadow:inset 0 0 0 1px #717171;"></div>
<div class="t" style="left:453.0px;top:1242.5px;font-size:17.7px;color:#575757;font-weight:400;letter-spacing:0px;">Search by device ID</div>
<div style="position:absolute;left:628px;top:1230px;width:41px;height:40px;background:#757575;border-radius:5px;"></div>
<svg style="position:absolute;left:638px;top:1241px;" width="22" height="22" viewBox="0 0 22 22"><circle cx="8.5" cy="8.5" r="6.8" fill="none" stroke="#1a1a1a" stroke-width="1.9"/><path d="M13.5,13.5 L19,19" stroke="#1a1a1a" stroke-width="1.9"/></svg>
<div style="position:absolute;left:890px;top:1225px;width:123px;height:51px;background:#7a7a7a;border-radius:8px;"></div>
<div class="t" style="left:906.0px;top:1242.8px;font-size:18px;color:#1e1e1e;font-weight:400;letter-spacing:0px;">Status</div>
<div style="position:absolute;left:972px;top:1242px;width:1px;height:17px;background:#717171;border-radius:0px;"></div>
<svg style="position:absolute;left:986px;top:1246px;" width="15" height="10" viewBox="0 0 15 10"><path d="M2.5,2.5 L7,7 L11.5,2.5" fill="none" stroke="#1e1e1e" stroke-width="1.8"/></svg>
<div style="position:absolute;left:1025px;top:1225px;width:112px;height:51px;background:#7a7a7a;border-radius:8px;"></div>
<div class="t" style="left:1040.0px;top:1242.8px;font-size:18px;color:#1e1e1e;font-weight:400;letter-spacing:0px;">Type</div>
<div style="position:absolute;left:1096px;top:1242px;width:1px;height:17px;background:#717171;border-radius:0px;"></div>
<svg style="position:absolute;left:1110px;top:1246px;" width="15" height="10" viewBox="0 0 15 10"><path d="M2.5,2.5 L7,7 L11.5,2.5" fill="none" stroke="#1e1e1e" stroke-width="1.8"/></svg>
<div style="position:absolute;left:1149px;top:1225px;width:145px;height:51px;background:#7a7a7a;border-radius:8px;"></div>
<div class="t" style="left:1164.0px;top:1242.8px;font-size:18px;color:#1e1e1e;font-weight:400;letter-spacing:0px;">Assignee</div>
<div style="position:absolute;left:1253px;top:1242px;width:1px;height:17px;background:#717171;border-radius:0px;"></div>
<svg style="position:absolute;left:1267px;top:1246px;" width="15" height="10" viewBox="0 0 15 10"><path d="M2.5,2.5 L7,7 L11.5,2.5" fill="none" stroke="#1e1e1e" stroke-width="1.8"/></svg>
<div style="position:absolute;left:1306px;top:1225px;width:132px;height:51px;background:#7a7a7a;border-radius:8px;"></div>
<div class="t" style="left:1321.5px;top:1242.8px;font-size:18px;color:#1e1e1e;font-weight:400;letter-spacing:0px;">Version</div>
<div style="position:absolute;left:1398px;top:1242px;width:1px;height:17px;background:#717171;border-radius:0px;"></div>
<svg style="position:absolute;left:1412px;top:1246px;" width="15" height="10" viewBox="0 0 15 10"><path d="M2.5,2.5 L7,7 L11.5,2.5" fill="none" stroke="#1e1e1e" stroke-width="1.8"/></svg>
<div style="position:absolute;left:1450px;top:1225px;width:96px;height:51px;background:#7a7a7a;border-radius:8px;"></div>
<div class="t" style="left:1465.0px;top:1242.8px;font-size:18px;color:#1e1e1e;font-weight:400;letter-spacing:0px;">OS</div>
<div style="position:absolute;left:1505px;top:1242px;width:1px;height:17px;background:#717171;border-radius:0px;"></div>
<svg style="position:absolute;left:1520px;top:1246px;" width="15" height="10" viewBox="0 0 15 10"><path d="M2.5,2.5 L7,7 L11.5,2.5" fill="none" stroke="#1e1e1e" stroke-width="1.8"/></svg>
<div style="position:absolute;left:1558px;top:1225px;width:110px;height:51px;background:#7a7a7a;border-radius:8px;"></div>
<div class="t" style="left:1573.0px;top:1242.8px;font-size:18px;color:#1e1e1e;font-weight:400;letter-spacing:0px;">Date</div>
<div style="position:absolute;left:1627px;top:1242px;width:1px;height:17px;background:#717171;border-radius:0px;"></div>
<svg style="position:absolute;left:1641px;top:1246px;" width="15" height="10" viewBox="0 0 15 10"><path d="M2.5,2.5 L7,7 L11.5,2.5" fill="none" stroke="#1e1e1e" stroke-width="1.8"/></svg>
<div style="position:absolute;left:1679px;top:1225px;width:130px;height:51px;background:#7a7a7a;border-radius:8px;"></div>
<div class="t" style="left:1693.8px;top:1242.8px;font-size:18px;color:#1e1e1e;font-weight:400;letter-spacing:0px;">Sort by</div>
<div style="position:absolute;left:1768px;top:1242px;width:1px;height:17px;background:#717171;border-radius:0px;"></div>
<svg style="position:absolute;left:1781px;top:1246px;" width="15" height="10" viewBox="0 0 15 10"><path d="M2.5,2.5 L7,7 L11.5,2.5" fill="none" stroke="#1e1e1e" stroke-width="1.8"/></svg>
<div style="position:absolute;left:437px;top:1291px;width:1372px;height:1.3px;background:#717171;border-radius:0px;"></div>
<div style="position:absolute;left:437px;top:1323px;width:1372px;height:20px;background:#777777;border-radius:8px;"></div>
<!--MODAL-->
<div style="position:absolute;left:339px;top:195px;width:1193px;height:940px;background:#ffffff;border-radius:12px;"></div>
<div class="t" style="left:360.7px;top:218.8px;font-size:27.3px;color:#262626;font-weight:700;letter-spacing:0px;">Crash-free Users</div>
<div class="t" style="left:360.7px;top:254.4px;font-size:18.1px;color:#6e6e6e;font-weight:400;letter-spacing:0px;">Analytical assessment of crash-free users</div>
<svg style="position:absolute;left:1480px;top:226px;" width="22" height="22" viewBox="0 0 22 22"><path d="M3.5,3.5 L18.5,18.5 M18.5,3.5 L3.5,18.5" stroke="#2a2a2a" stroke-width="1.7"/></svg>
<div style="position:absolute;left:360px;top:300px;width:401px;height:57px;background:#f7f7f7;border-radius:8px;"></div>
<div style="position:absolute;left:368px;top:308px;width:116px;height:42px;background:#5b9cf6;border-radius:6px;"></div>
<div class="t" style="left:425.5px;transform:translateX(-50%);top:321.2px;font-size:16.4px;color:#ffffff;font-weight:400;letter-spacing:0px;-webkit-text-stroke:0.3px #ffffff;">Last 7 days</div>
<div class="t" style="left:555.0px;transform:translateX(-50%);top:321.2px;font-size:16.4px;color:#222222;font-weight:400;letter-spacing:0px;-webkit-text-stroke:0.3px #222222;">Last 15 days</div>
<div class="t" style="left:690.8px;transform:translateX(-50%);top:321.2px;font-size:16.4px;color:#222222;font-weight:400;letter-spacing:0px;-webkit-text-stroke:0.3px #222222;">Last 28 days</div>
<div style="position:absolute;left:360px;top:373px;width:1151px;height:378px;background:#f8f8f8;border-radius:12px;"></div>
<svg style="position:absolute;left:443px;top:420.2px;" width="1037" height="2" viewBox="0 0 1037 2"><line x1="0" y1="1" x2="1037" y2="1" stroke="#dcdcdc" stroke-width="1" stroke-dasharray="4.5 3.5"/></svg>
<div class="t" style="right:1445.2px;top:413.6px;font-size:16.8px;color:#737373;font-weight:400;letter-spacing:0px;">400k</div>
<svg style="position:absolute;left:443px;top:488.2px;" width="1037" height="2" viewBox="0 0 1037 2"><line x1="0" y1="1" x2="1037" y2="1" stroke="#dcdcdc" stroke-width="1" stroke-dasharray="4.5 3.5"/></svg>
<div class="t" style="right:1445.2px;top:481.6px;font-size:16.8px;color:#737373;font-weight:400;letter-spacing:0px;">300k</div>
<svg style="position:absolute;left:443px;top:556.4px;" width="1037" height="2" viewBox="0 0 1037 2"><line x1="0" y1="1" x2="1037" y2="1" stroke="#dcdcdc" stroke-width="1" stroke-dasharray="4.5 3.5"/></svg>
<div class="t" style="right:1445.2px;top:549.8px;font-size:16.8px;color:#737373;font-weight:400;letter-spacing:0px;">200k</div>
<svg style="position:absolute;left:443px;top:624.3px;" width="1037" height="2" viewBox="0 0 1037 2"><line x1="0" y1="1" x2="1037" y2="1" stroke="#dcdcdc" stroke-width="1" stroke-dasharray="4.5 3.5"/></svg>
<div class="t" style="right:1445.2px;top:617.7px;font-size:16.8px;color:#737373;font-weight:400;letter-spacing:0px;">100k</div>
<div class="t" style="right:1445.2px;top:686.0px;font-size:16.8px;color:#737373;font-weight:400;letter-spacing:0px;">0</div>
<div style="position:absolute;left:443px;top:693px;width:1037px;height:1.2px;background:#d9d9d9;border-radius:0px;"></div>
<div style="position:absolute;left:516px;top:693px;width:1px;height:7px;background:#d4d4d4;border-radius:0px;"></div>
<div class="t" style="left:516.5px;transform:translateX(-50%);top:707.3px;font-size:16.6px;color:#767676;font-weight:400;letter-spacing:0px;">03 Dec</div>
<div style="position:absolute;left:665px;top:693px;width:1px;height:7px;background:#d4d4d4;border-radius:0px;"></div>
<div class="t" style="left:664.8px;transform:translateX(-50%);top:707.3px;font-size:16.6px;color:#767676;font-weight:400;letter-spacing:0px;">04 Dec</div>
<div style="position:absolute;left:813px;top:693px;width:1px;height:7px;background:#d4d4d4;border-radius:0px;"></div>
<div class="t" style="left:813.0px;transform:translateX(-50%);top:707.3px;font-size:16.6px;color:#767676;font-weight:400;letter-spacing:0px;">05 Dec</div>
<div style="position:absolute;left:961px;top:693px;width:1px;height:7px;background:#d4d4d4;border-radius:0px;"></div>
<div class="t" style="left:961.3px;transform:translateX(-50%);top:707.3px;font-size:16.6px;color:#767676;font-weight:400;letter-spacing:0px;">06 Dec</div>
<div style="position:absolute;left:1110px;top:693px;width:1px;height:7px;background:#d4d4d4;border-radius:0px;"></div>
<div class="t" style="left:1109.6px;transform:translateX(-50%);top:707.3px;font-size:16.6px;color:#767676;font-weight:400;letter-spacing:0px;">07 Dec</div>
<div style="position:absolute;left:1258px;top:693px;width:1px;height:7px;background:#d4d4d4;border-radius:0px;"></div>
<div class="t" style="left:1257.8px;transform:translateX(-50%);top:707.3px;font-size:16.6px;color:#767676;font-weight:400;letter-spacing:0px;">08 Dec</div>
<div style="position:absolute;left:1406px;top:693px;width:1px;height:7px;background:#d4d4d4;border-radius:0px;"></div>
<div class="t" style="left:1406.1px;transform:translateX(-50%);top:707.3px;font-size:16.6px;color:#767676;font-weight:400;letter-spacing:0px;">09 Dec</div>
<svg style="position:absolute;left:0px;top:0px;pointer-events:none;" width="1872" height="1332" viewBox="0 0 1872 1332"><defs><filter id="bl" x="-10%" y="-50%" width="120%" height="200%"><feGaussianBlur stdDeviation="8"/></filter><clipPath id="cc"><rect x="443" y="380" width="1037" height="313"/></clipPath></defs><g clip-path="url(#cc)"><path d="M443.0,628.0 L446.1,628.5 L449.2,628.9 L452.2,629.4 L455.3,629.9 L458.4,630.3 L461.5,630.8 L464.5,631.3 L467.6,631.7 L470.7,632.2 L473.8,632.6 L476.8,633.0 L479.9,633.5 L483.0,633.9 L486.1,634.3 L489.2,634.7 L492.2,635.1 L495.3,635.5 L498.4,635.9 L501.5,636.3 L504.5,636.7 L507.6,637.0 L510.7,637.4 L513.8,637.7 L516.8,638.0 L519.9,638.3 L523.0,638.6 L526.1,638.9 L529.1,639.1 L532.2,639.4 L535.2,639.6 L538.3,639.8 L541.3,640.0 L544.4,640.2 L547.4,640.4 L550.5,640.6 L553.6,640.8 L556.6,640.9 L559.7,641.1 L562.7,641.2 L565.8,641.3 L568.8,641.4 L571.9,641.5 L574.9,641.6 L578.0,641.7 L581.0,641.7 L584.1,641.8 L587.2,641.9 L590.2,641.9 L593.3,641.9 L596.3,642.0 L599.4,642.0 L602.4,642.0 L605.5,642.0 L608.5,642.0 L611.6,642.0 L614.6,642.0 L617.7,642.0 L620.7,641.9 L623.8,641.9 L626.8,641.9 L629.9,641.8 L632.9,641.8 L636.0,641.7 L639.0,641.7 L642.1,641.6 L645.1,641.5 L648.2,641.4 L651.2,641.3 L654.3,641.2 L657.3,641.1 L660.4,641.0 L663.4,640.9 L666.5,640.7 L669.5,640.6 L672.6,640.4 L675.6,640.3 L678.7,640.1 L681.7,639.9 L684.8,639.7 L687.8,639.5 L690.9,639.3 L693.9,639.1 L697.0,638.8 L700.0,638.6 L703.1,638.3 L706.1,638.1 L709.2,637.8 L712.3,637.5 L715.4,637.2 L718.4,636.9 L721.5,636.6 L724.6,636.3 L727.7,635.9 L730.7,635.6 L733.8,635.2 L736.9,634.8 L740.0,634.4 L743.0,634.1 L746.1,633.6 L749.2,633.2 L752.3,632.8 L755.3,632.4 L758.4,631.9 L761.5,631.5 L764.6,631.0 L767.6,630.5 L770.7,630.0 L773.8,629.5 L776.9,629.0 L779.9,628.5 L783.0,628.0 L786.0,627.5 L789.0,626.9 L792.0,626.4 L795.0,625.9 L798.0,625.3 L801.0,624.7 L804.0,624.2 L807.0,623.6 L810.0,623.0 L813.0,622.4 L816.0,621.8 L819.0,621.2 L822.0,620.6 L825.0,620.0 L828.0,619.4 L831.0,618.8 L834.0,618.2 L837.0,617.5 L840.0,616.9 L843.0,616.3 L846.0,615.7 L849.0,615.0 L852.0,614.4 L855.0,613.8 L858.0,613.2 L861.0,612.6 L864.0,611.9 L867.0,611.3 L870.0,610.7 L873.0,610.1 L876.0,609.5 L879.0,608.9 L882.0,608.3 L885.0,607.7 L888.0,607.1 L891.0,606.5 L894.0,605.9 L897.0,605.4 L900.0,604.8 L903.0,604.2 L906.0,603.7 L909.0,603.1 L912.0,602.6 L915.0,602.0 L918.0,601.5 L921.0,600.9 L924.0,600.4 L927.0,599.9 L930.0,599.3 L933.0,598.8 L936.0,598.3 L939.0,597.8 L942.0,597.3 L945.0,596.8 L948.0,596.3 L951.0,595.8 L954.0,595.3 L957.0,594.9 L960.0,594.4 L963.1,593.9 L966.1,593.5 L969.2,593.0 L972.3,592.5 L975.4,592.1 L978.4,591.6 L981.5,591.2 L984.6,590.8 L987.7,590.4 L990.7,589.9 L993.8,589.5 L996.9,589.1 L1000.0,588.7 L1003.0,588.3 L1006.1,588.0 L1009.2,587.6 L1012.3,587.2 L1015.3,586.8 L1018.4,586.5 L1021.5,586.1 L1024.6,585.8 L1027.6,585.5 L1030.7,585.1 L1033.8,584.8 L1036.9,584.5 L1039.9,584.2 L1043.0,583.9 L1046.0,583.6 L1049.0,583.3 L1052.0,583.1 L1055.0,582.8 L1058.0,582.6 L1061.0,582.3 L1064.0,582.1 L1067.0,581.8 L1070.0,581.6 L1073.0,581.4 L1076.0,581.2 L1079.0,581.0 L1082.0,580.8 L1085.0,580.6 L1088.0,580.5 L1091.0,580.3 L1094.0,580.2 L1097.0,580.0 L1100.0,579.9 L1103.0,579.8 L1106.0,579.7 L1109.0,579.6 L1112.0,579.5 L1115.0,579.4 L1118.0,579.4 L1121.0,579.3 L1124.0,579.3 L1127.0,579.2 L1130.0,579.2 L1133.0,579.2 L1136.0,579.2 L1139.0,579.2 L1142.0,579.2 L1145.0,579.3 L1148.0,579.3 L1151.0,579.4 L1154.0,579.5 L1157.0,579.6 L1160.0,579.7 L1163.0,579.8 L1166.0,579.9 L1169.0,580.0 L1172.0,580.2 L1175.0,580.3 L1178.0,580.5 L1181.0,580.7 L1184.0,580.8 L1187.0,581.0 L1190.0,581.2 L1193.0,581.5 L1196.0,581.7 L1199.0,581.9 L1202.0,582.2 L1205.0,582.4 L1208.0,582.7 L1211.0,583.0 L1214.0,583.3 L1217.0,583.6 L1220.0,583.9 L1223.1,584.2 L1226.1,584.6 L1229.2,584.9 L1232.3,585.3 L1235.4,585.6 L1238.4,586.0 L1241.5,586.4 L1244.6,586.8 L1247.7,587.2 L1250.7,587.6 L1253.8,588.0 L1256.9,588.5 L1260.0,588.9 L1263.0,589.3 L1266.1,589.8 L1269.2,590.2 L1272.3,590.7 L1275.3,591.1 L1278.4,591.6 L1281.5,592.1 L1284.6,592.6 L1287.6,593.0 L1290.7,593.5 L1293.8,594.0 L1296.9,594.5 L1299.9,595.0 L1303.0,595.5 L1306.0,596.0 L1309.0,596.5 L1312.0,597.0 L1315.0,597.5 L1318.0,598.0 L1321.0,598.5 L1324.0,599.0 L1327.0,599.5 L1330.0,600.0 L1333.0,600.5 L1336.0,601.0 L1339.0,601.5 L1342.0,602.1 L1345.0,602.6 L1348.0,603.1 L1351.0,603.6 L1354.0,604.2 L1357.0,604.7 L1360.0,605.2 L1363.0,605.8 L1366.0,606.3 L1369.0,606.8 L1372.0,607.4 L1375.0,607.9 L1378.0,608.5 L1381.0,609.0 L1384.0,609.6 L1387.0,610.1 L1390.0,610.7 L1393.0,611.2 L1396.0,611.8 L1399.0,612.4 L1402.0,612.9 L1405.0,613.5 L1408.0,614.1 L1411.0,614.6 L1414.0,615.2 L1417.0,615.8 L1420.0,616.3 L1423.0,616.9 L1426.0,617.5 L1429.0,618.1 L1432.0,618.6 L1435.0,619.2 L1438.0,619.8 L1441.0,620.4 L1444.0,621.0 L1447.0,621.5 L1450.0,622.1 L1453.0,622.7 L1456.0,623.3 L1459.0,623.9 L1462.0,624.5 L1465.0,625.1 L1468.0,625.6 L1471.0,626.2 L1474.0,626.8 L1477.0,627.4 L1480.0,628.0" fill="none" stroke="#e0102a" stroke-width="22" opacity="0.08" transform="translate(0,10)" filter="url(#bl)"/><path d="M443.0,626.0 L446.0,625.1 L449.1,624.1 L452.1,623.2 L455.1,622.3 L458.1,621.4 L461.2,620.5 L464.2,619.5 L467.2,618.6 L470.3,617.7 L473.3,616.8 L476.3,615.9 L479.4,615.0 L482.4,614.2 L485.4,613.3 L488.4,612.4 L491.5,611.5 L494.5,610.7 L497.5,609.8 L500.6,609.0 L503.6,608.2 L506.6,607.4 L509.6,606.6 L512.7,605.8 L515.7,605.0 L518.7,604.2 L521.8,603.5 L524.8,602.7 L527.8,602.0 L530.9,601.3 L533.9,600.6 L536.9,599.9 L539.9,599.3 L543.0,598.6 L546.0,598.0 L549.1,597.4 L552.2,596.8 L555.4,596.2 L558.5,595.6 L561.6,595.1 L564.7,594.6 L567.9,594.1 L571.0,593.6 L574.1,593.2 L577.2,592.8 L580.4,592.4 L583.5,592.0 L586.6,591.7 L589.7,591.4 L592.9,591.2 L596.0,590.9 L599.1,590.8 L602.2,590.6 L605.4,590.5 L608.5,590.4 L611.6,590.4 L614.6,590.4 L617.7,590.4 L620.7,590.5 L623.8,590.6 L626.8,590.8 L629.9,591.0 L632.9,591.2 L636.0,591.4 L639.0,591.7 L642.1,592.0 L645.1,592.3 L648.2,592.6 L651.2,593.0 L654.3,593.4 L657.3,593.8 L660.4,594.2 L663.4,594.7 L666.5,595.1 L669.5,595.6 L672.6,596.1 L675.6,596.6 L678.7,597.1 L681.7,597.7 L684.8,598.2 L687.8,598.8 L690.9,599.3 L693.9,599.9 L697.0,600.4 L700.0,601.0 L703.0,601.6 L706.0,602.1 L709.0,602.7 L712.0,603.2 L715.0,603.8 L718.0,604.3 L721.0,604.9 L724.0,605.4 L727.0,606.0 L730.0,606.5 L733.0,607.0 L736.0,607.5 L739.0,608.0 L742.0,608.5 L745.0,609.0 L748.0,609.4 L751.0,609.9 L754.0,610.3 L757.0,610.7 L760.0,611.1 L763.0,611.4 L766.0,611.8 L769.0,612.1 L772.0,612.4 L775.0,612.7 L778.0,613.0 L781.0,613.2 L784.0,613.4 L787.0,613.6 L790.0,613.7 L793.1,613.8 L796.1,613.9 L799.2,613.9 L802.3,614.0 L805.4,614.0 L808.4,613.9 L811.5,613.8 L814.6,613.7 L817.6,613.6 L820.7,613.4 L823.8,613.2 L826.9,613.0 L829.9,612.7 L833.0,612.4 L836.1,612.1 L839.1,611.7 L842.2,611.3 L845.3,610.9 L848.4,610.4 L851.4,609.9 L854.5,609.4 L857.6,608.8 L860.6,608.2 L863.7,607.6 L866.8,607.0 L869.9,606.3 L872.9,605.6 L876.0,604.8 L879.0,604.0 L882.0,603.2 L885.0,602.4 L888.0,601.6 L891.0,600.7 L894.0,599.8 L897.0,598.9 L900.0,598.0 L903.0,597.0 L906.0,596.0 L909.0,595.1 L912.0,594.1 L915.0,593.1 L918.0,592.1 L921.0,591.0 L924.0,590.0 L927.0,589.0 L930.0,588.0 L933.0,586.9 L936.0,585.9 L939.0,584.9 L942.0,583.9 L945.0,582.9 L948.0,581.9 L951.0,580.9 L954.0,579.9 L957.0,578.9 L960.0,578.0 L963.1,577.0 L966.1,576.1 L969.2,575.2 L972.3,574.3 L975.4,573.4 L978.4,572.6 L981.5,571.7 L984.6,570.9 L987.7,570.1 L990.7,569.3 L993.8,568.5 L996.9,567.8 L1000.0,567.0 L1003.0,566.3 L1006.1,565.6 L1009.2,564.9 L1012.3,564.2 L1015.3,563.6 L1018.4,562.9 L1021.5,562.3 L1024.6,561.7 L1027.6,561.1 L1030.7,560.5 L1033.8,559.9 L1036.9,559.4 L1039.9,558.8 L1043.0,558.3 L1046.0,557.8 L1049.0,557.3 L1052.0,556.8 L1055.0,556.4 L1058.0,555.9 L1061.0,555.5 L1064.0,555.1 L1067.0,554.7 L1070.0,554.3 L1073.0,554.0 L1076.0,553.6 L1079.0,553.3 L1082.0,553.0 L1085.0,552.6 L1088.0,552.4 L1091.0,552.1 L1094.0,551.8 L1097.0,551.6 L1100.0,551.4 L1103.0,551.2 L1106.0,551.0 L1109.0,550.8 L1112.0,550.7 L1115.0,550.5 L1118.0,550.4 L1121.0,550.3 L1124.0,550.2 L1127.0,550.2 L1130.0,550.1 L1133.0,550.1 L1136.0,550.1 L1139.0,550.1 L1142.0,550.1 L1145.0,550.2 L1148.0,550.3 L1151.0,550.4 L1154.0,550.5 L1157.0,550.6 L1160.0,550.7 L1163.0,550.9 L1166.0,551.1 L1169.0,551.2 L1172.0,551.4 L1175.0,551.7 L1178.0,551.9 L1181.0,552.1 L1184.0,552.4 L1187.0,552.7 L1190.0,552.9 L1193.0,553.2 L1196.0,553.6 L1199.0,553.9 L1202.0,554.2 L1205.0,554.5 L1208.0,554.9 L1211.0,555.3 L1214.0,555.6 L1217.0,556.0 L1220.0,556.4 L1223.1,556.8 L1226.1,557.2 L1229.2,557.7 L1232.3,558.1 L1235.4,558.5 L1238.4,559.0 L1241.5,559.5 L1244.6,560.0 L1247.7,560.5 L1250.7,561.0 L1253.8,561.5 L1256.9,562.0 L1260.0,562.6 L1263.0,563.2 L1266.1,563.7 L1269.2,564.4 L1272.3,565.0 L1275.3,565.6 L1278.4,566.3 L1281.5,567.0 L1284.6,567.7 L1287.6,568.4 L1290.7,569.1 L1293.8,569.9 L1296.9,570.7 L1299.9,571.5 L1303.0,572.3 L1306.0,573.1 L1309.0,574.0 L1312.0,574.9 L1315.0,575.8 L1318.0,576.7 L1321.0,577.6 L1324.0,578.5 L1327.0,579.5 L1330.0,580.5 L1333.0,581.4 L1336.0,582.4 L1339.0,583.4 L1342.0,584.4 L1345.0,585.4 L1348.0,586.5 L1351.0,587.5 L1354.0,588.5 L1357.0,589.5 L1360.0,590.6 L1363.0,591.6 L1366.0,592.6 L1369.0,593.6 L1372.0,594.7 L1375.0,595.7 L1378.0,596.7 L1381.0,597.7 L1384.0,598.7 L1387.0,599.6 L1390.0,600.6 L1393.0,601.6 L1396.0,602.5 L1399.0,603.4 L1402.0,604.3 L1405.0,605.2 L1408.0,606.1 L1411.0,607.0 L1414.0,607.8 L1417.0,608.7 L1420.0,609.5 L1423.0,610.3 L1426.0,611.1 L1429.0,611.9 L1432.0,612.7 L1435.0,613.5 L1438.0,614.3 L1441.0,615.1 L1444.0,615.8 L1447.0,616.6 L1450.0,617.3 L1453.0,618.1 L1456.0,618.8 L1459.0,619.5 L1462.0,620.3 L1465.0,621.0 L1468.0,621.7 L1471.0,622.4 L1474.0,623.2 L1477.0,623.9 L1480.0,624.6" fill="none" stroke="#a9a9b0" stroke-width="22" opacity="0.08" transform="translate(0,10)" filter="url(#bl)"/><path d="M443.0,480.3 L446.0,481.2 L449.0,482.0 L452.0,482.9 L455.0,483.7 L458.0,484.6 L461.0,485.4 L464.0,486.3 L467.0,487.1 L470.0,487.9 L473.0,488.8 L476.0,489.6 L479.0,490.4 L482.0,491.2 L485.0,492.1 L488.0,492.9 L491.0,493.6 L494.0,494.4 L497.0,495.2 L500.0,496.0 L503.0,496.7 L506.0,497.5 L509.0,498.2 L512.0,498.9 L515.0,499.6 L518.0,500.3 L521.0,501.0 L524.0,501.7 L527.0,502.4 L530.0,503.0 L533.1,503.6 L536.1,504.3 L539.2,504.9 L542.3,505.5 L545.4,506.0 L548.4,506.6 L551.5,507.1 L554.6,507.7 L557.6,508.2 L560.7,508.7 L563.8,509.1 L566.9,509.6 L569.9,510.0 L573.0,510.4 L576.1,510.8 L579.1,511.2 L582.2,511.5 L585.3,511.9 L588.4,512.2 L591.4,512.5 L594.5,512.7 L597.6,513.0 L600.6,513.2 L603.7,513.4 L606.8,513.6 L609.9,513.7 L612.9,513.9 L616.0,514.0 L619.0,514.1 L622.0,514.2 L625.0,514.2 L628.0,514.2 L631.0,514.2 L634.0,514.2 L637.0,514.1 L640.0,514.1 L643.0,514.0 L646.0,513.8 L649.0,513.7 L652.0,513.5 L655.0,513.3 L658.0,513.0 L661.0,512.7 L664.0,512.4 L667.0,512.1 L670.0,511.7 L673.0,511.3 L676.0,510.8 L679.0,510.4 L682.0,509.8 L685.0,509.3 L688.0,508.7 L691.0,508.1 L694.0,507.4 L697.0,506.7 L700.0,506.0 L703.1,505.2 L706.3,504.3 L709.4,503.4 L712.6,502.5 L715.7,501.6 L718.9,500.6 L722.0,499.6 L725.2,498.7 L728.3,497.7 L731.5,496.7 L734.6,495.7 L737.8,494.7 L740.9,493.7 L744.1,492.8 L747.2,491.9 L750.4,491.0 L753.5,490.1 L756.7,489.3 L759.8,488.5 L762.8,487.8 L765.9,487.1 L768.9,486.5 L772.0,485.9 L775.0,485.3 L778.0,484.8 L781.1,484.3 L784.1,483.9 L787.2,483.5 L790.2,483.1 L793.2,482.7 L796.3,482.4 L799.3,482.1 L802.3,481.8 L805.4,481.6 L808.4,481.4 L811.5,481.2 L814.5,481.0 L817.5,480.8 L820.6,480.7 L823.6,480.5 L826.7,480.4 L829.7,480.3 L832.7,480.2 L835.8,480.1 L838.8,480.1 L841.8,480.0 L844.9,479.9 L847.9,479.9 L850.9,479.9 L854.0,479.8 L857.0,479.8 L860.0,479.8 L863.1,479.8 L866.1,479.8 L869.2,479.9 L872.2,479.9 L875.2,479.9 L878.3,479.9 L881.3,480.0 L884.3,480.0 L887.4,480.1 L890.4,480.1 L893.4,480.2 L896.5,480.2 L899.5,480.3 L902.5,480.4 L905.5,480.4 L908.6,480.5 L911.6,480.6 L914.6,480.7 L917.6,480.7 L920.7,480.8 L923.7,480.9 L926.7,481.0 L929.8,481.1 L932.8,481.2 L935.8,481.4 L938.8,481.5 L941.9,481.6 L944.9,481.8 L947.9,481.9 L950.9,482.1 L954.0,482.2 L957.0,482.4 L960.0,482.6 L963.1,482.8 L966.1,483.0 L969.2,483.2 L972.3,483.5 L975.4,483.7 L978.4,484.0 L981.5,484.3 L984.6,484.6 L987.7,484.9 L990.7,485.2 L993.8,485.5 L996.9,485.9 L1000.0,486.2 L1003.0,486.6 L1006.1,487.0 L1009.2,487.4 L1012.3,487.8 L1015.3,488.3 L1018.4,488.8 L1021.5,489.2 L1024.6,489.7 L1027.6,490.2 L1030.7,490.8 L1033.8,491.3 L1036.9,491.9 L1039.9,492.5 L1043.0,493.1 L1046.0,493.7 L1049.0,494.3 L1052.0,495.0 L1055.0,495.7 L1058.0,496.3 L1061.0,497.0 L1064.0,497.8 L1067.0,498.5 L1070.0,499.2 L1073.0,500.0 L1076.0,500.7 L1079.0,501.5 L1082.0,502.3 L1085.0,503.0 L1088.0,503.8 L1091.0,504.6 L1094.0,505.4 L1097.0,506.2 L1100.0,507.0 L1103.0,507.8 L1106.0,508.6 L1109.0,509.4 L1112.0,510.2 L1115.0,511.0 L1118.0,511.8 L1121.0,512.6 L1124.0,513.3 L1127.0,514.1 L1130.0,514.9 L1133.0,515.6 L1136.0,516.4 L1139.0,517.1 L1142.0,517.9 L1145.0,518.6 L1148.0,519.3 L1151.0,520.0 L1154.0,520.7 L1157.0,521.4 L1160.0,522.0 L1163.0,522.7 L1166.0,523.3 L1169.0,524.0 L1172.0,524.6 L1175.0,525.2 L1178.0,525.8 L1181.0,526.4 L1184.0,527.0 L1187.0,527.5 L1190.0,528.1 L1193.0,528.6 L1196.0,529.2 L1199.0,529.7 L1202.0,530.2 L1205.0,530.7 L1208.0,531.2 L1211.0,531.7 L1214.0,532.1 L1217.0,532.6 L1220.0,533.0 L1223.1,533.4 L1226.1,533.9 L1229.2,534.3 L1232.2,534.7 L1235.3,535.0 L1238.3,535.4 L1241.4,535.7 L1244.4,536.1 L1247.5,536.4 L1250.5,536.7 L1253.6,537.0 L1256.7,537.3 L1259.7,537.5 L1262.8,537.8 L1265.8,538.0 L1268.9,538.2 L1271.9,538.4 L1275.0,538.6 L1278.0,538.7 L1281.1,538.8 L1284.2,539.0 L1287.2,539.1 L1290.3,539.1 L1293.3,539.2 L1296.4,539.2 L1299.4,539.2 L1302.5,539.2 L1305.5,539.2 L1308.6,539.2 L1311.6,539.1 L1314.7,539.0 L1317.7,538.9 L1320.7,538.8 L1323.7,538.6 L1326.7,538.4 L1329.8,538.2 L1332.8,538.0 L1335.8,537.8 L1338.8,537.5 L1341.8,537.3 L1344.8,537.0 L1347.8,536.7 L1350.8,536.4 L1353.8,536.1 L1356.9,535.7 L1359.9,535.4 L1362.9,535.0 L1365.9,534.6 L1368.9,534.3 L1371.9,533.9 L1374.9,533.5 L1377.9,533.0 L1380.9,532.6 L1384.0,532.2 L1387.0,531.8 L1390.0,531.3 L1393.0,530.9 L1396.0,530.4 L1399.0,529.9 L1402.0,529.5 L1405.0,529.0 L1408.0,528.5 L1411.0,528.1 L1414.0,527.6 L1417.0,527.1 L1420.0,526.6 L1423.0,526.1 L1426.0,525.6 L1429.0,525.1 L1432.0,524.6 L1435.0,524.1 L1438.0,523.6 L1441.0,523.1 L1444.0,522.6 L1447.0,522.1 L1450.0,521.6 L1453.0,521.1 L1456.0,520.6 L1459.0,520.0 L1462.0,519.5 L1465.0,519.0 L1468.0,518.5 L1471.0,518.0 L1474.0,517.4 L1477.0,516.9 L1480.0,516.4" fill="none" stroke="#0c8585" stroke-width="22" opacity="0.08" transform="translate(0,10)" filter="url(#bl)"/><path d="M443.0,589.0 L446.1,588.1 L449.2,587.2 L452.2,586.3 L455.3,585.4 L458.4,584.5 L461.5,583.6 L464.5,582.8 L467.6,581.9 L470.7,581.0 L473.8,580.0 L476.8,579.1 L479.9,578.2 L483.0,577.3 L486.1,576.4 L489.2,575.5 L492.2,574.6 L495.3,573.6 L498.4,572.7 L501.5,571.8 L504.5,570.8 L507.6,569.9 L510.7,568.9 L513.8,567.9 L516.8,567.0 L519.9,566.0 L523.0,565.0 L526.0,564.0 L529.0,563.1 L532.0,562.1 L535.0,561.1 L538.0,560.1 L541.0,559.1 L544.0,558.1 L547.0,557.1 L550.0,556.1 L553.0,555.1 L556.0,554.1 L559.0,553.1 L562.0,552.2 L565.0,551.2 L568.0,550.2 L571.0,549.2 L574.0,548.2 L577.0,547.2 L580.0,546.3 L583.0,545.3 L586.0,544.4 L589.0,543.4 L592.0,542.5 L595.0,541.6 L598.0,540.7 L601.0,539.8 L604.0,538.9 L607.0,538.0 L610.0,537.2 L613.0,536.3 L616.0,535.5 L619.0,534.7 L622.0,533.9 L625.0,533.1 L628.0,532.4 L631.0,531.6 L634.0,530.9 L637.0,530.2 L640.0,529.5 L643.0,528.8 L646.0,528.1 L649.0,527.5 L652.0,526.9 L655.0,526.2 L658.0,525.6 L661.0,525.0 L664.0,524.5 L667.0,523.9 L670.0,523.4 L673.0,522.8 L676.0,522.3 L679.0,521.8 L682.0,521.3 L685.0,520.9 L688.0,520.4 L691.0,520.0 L694.0,519.5 L697.0,519.1 L700.0,518.7 L703.1,518.3 L706.1,517.9 L709.2,517.5 L712.3,517.2 L715.4,516.8 L718.4,516.5 L721.5,516.2 L724.6,515.9 L727.7,515.6 L730.7,515.3 L733.8,515.1 L736.9,514.8 L740.0,514.6 L743.0,514.4 L746.1,514.2 L749.2,514.0 L752.3,513.8 L755.3,513.6 L758.4,513.5 L761.5,513.4 L764.6,513.3 L767.6,513.2 L770.7,513.1 L773.8,513.0 L776.9,513.0 L779.9,512.9 L783.0,512.9 L786.0,512.9 L789.1,512.9 L792.1,512.9 L795.2,513.0 L798.2,513.0 L801.3,513.1 L804.3,513.2 L807.3,513.3 L810.4,513.4 L813.4,513.5 L816.5,513.6 L819.5,513.8 L822.6,513.9 L825.6,514.1 L828.7,514.3 L831.7,514.5 L834.7,514.8 L837.8,515.0 L840.8,515.2 L843.9,515.5 L846.9,515.8 L850.0,516.1 L853.0,516.4 L856.0,516.7 L859.1,517.1 L862.1,517.4 L865.1,517.8 L868.2,518.2 L871.2,518.6 L874.2,519.0 L877.3,519.4 L880.3,519.8 L883.3,520.3 L886.4,520.8 L889.4,521.3 L892.5,521.8 L895.5,522.3 L898.5,522.9 L901.6,523.4 L904.6,524.0 L907.6,524.6 L910.7,525.3 L913.7,525.9 L916.7,526.6 L919.8,527.3 L922.8,528.0 L925.9,528.7 L929.0,529.5 L932.1,530.3 L935.2,531.1 L938.3,531.9 L941.4,532.7 L944.5,533.5 L947.6,534.3 L950.7,535.1 L953.8,535.8 L956.9,536.6 L960.0,537.3 L963.1,538.0 L966.1,538.7 L969.2,539.3 L972.3,539.9 L975.4,540.5 L978.4,541.1 L981.5,541.7 L984.6,542.2 L987.7,542.7 L990.7,543.2 L993.8,543.7 L996.9,544.2 L1000.0,544.7 L1003.0,545.2 L1006.1,545.7 L1009.2,546.1 L1012.3,546.6 L1015.3,547.0 L1018.4,547.5 L1021.5,547.9 L1024.6,548.4 L1027.6,548.9 L1030.7,549.3 L1033.8,549.8 L1036.9,550.3 L1039.9,550.8 L1043.0,551.3 L1046.0,551.8 L1049.0,552.3 L1052.0,552.9 L1055.0,553.4 L1058.0,553.9 L1061.0,554.5 L1064.0,555.1 L1067.0,555.7 L1070.0,556.2 L1073.0,556.8 L1076.0,557.5 L1079.0,558.1 L1082.0,558.7 L1085.0,559.3 L1088.0,560.0 L1091.0,560.6 L1094.0,561.3 L1097.0,561.9 L1100.0,562.6 L1103.0,563.3 L1106.0,564.0 L1109.0,564.6 L1112.0,565.3 L1115.0,566.0 L1118.0,566.7 L1121.0,567.4 L1124.0,568.1 L1127.0,568.9 L1130.0,569.6 L1133.0,570.3 L1136.0,571.0 L1139.0,571.7 L1142.0,572.4 L1145.0,573.2 L1148.0,573.9 L1151.0,574.6 L1154.0,575.3 L1157.0,576.1 L1160.0,576.8 L1163.0,577.5 L1166.0,578.2 L1169.0,578.9 L1172.0,579.6 L1175.0,580.3 L1178.0,581.0 L1181.0,581.7 L1184.0,582.4 L1187.0,583.0 L1190.0,583.7 L1193.0,584.3 L1196.0,585.0 L1199.0,585.6 L1202.0,586.2 L1205.0,586.9 L1208.0,587.4 L1211.0,588.0 L1214.0,588.6 L1217.0,589.2 L1220.0,589.7 L1223.0,590.2 L1226.1,590.7 L1229.1,591.2 L1232.1,591.7 L1235.1,592.2 L1238.2,592.7 L1241.2,593.1 L1244.2,593.5 L1247.3,593.9 L1250.3,594.3 L1253.3,594.7 L1256.3,595.1 L1259.4,595.4 L1262.4,595.8 L1265.4,596.1 L1268.5,596.4 L1271.5,596.7 L1274.5,597.0 L1277.5,597.2 L1280.6,597.5 L1283.6,597.7 L1286.6,597.9 L1289.7,598.2 L1292.7,598.4 L1295.7,598.5 L1298.7,598.7 L1301.8,598.9 L1304.8,599.0 L1307.8,599.2 L1310.9,599.3 L1313.9,599.4 L1316.9,599.5 L1319.9,599.6 L1323.0,599.6 L1326.0,599.7 L1329.0,599.7 L1332.1,599.8 L1335.1,599.8 L1338.2,599.8 L1341.2,599.8 L1344.3,599.8 L1347.3,599.8 L1350.3,599.8 L1353.4,599.7 L1356.4,599.6 L1359.5,599.6 L1362.5,599.5 L1365.6,599.4 L1368.6,599.3 L1371.7,599.2 L1374.7,599.1 L1377.7,598.9 L1380.8,598.8 L1383.8,598.6 L1386.9,598.5 L1389.9,598.3 L1393.0,598.1 L1396.0,597.9 L1399.0,597.7 L1402.0,597.5 L1405.0,597.3 L1408.0,597.0 L1411.0,596.8 L1414.0,596.5 L1417.0,596.3 L1420.0,596.0 L1423.0,595.7 L1426.0,595.5 L1429.0,595.2 L1432.0,594.9 L1435.0,594.6 L1438.0,594.3 L1441.0,594.0 L1444.0,593.7 L1447.0,593.4 L1450.0,593.0 L1453.0,592.7 L1456.0,592.4 L1459.0,592.1 L1462.0,591.7 L1465.0,591.4 L1468.0,591.1 L1471.0,590.7 L1474.0,590.4 L1477.0,590.0 L1480.0,589.7" fill="none" stroke="#ff9410" stroke-width="22" opacity="0.08" transform="translate(0,10)" filter="url(#bl)"/><path d="M443.0,564.0 L446.0,564.6 L449.1,565.1 L452.1,565.7 L455.1,566.2 L458.1,566.8 L461.2,567.3 L464.2,567.9 L467.2,568.4 L470.3,568.9 L473.3,569.5 L476.3,570.0 L479.4,570.5 L482.4,571.0 L485.4,571.5 L488.4,571.9 L491.5,572.4 L494.5,572.9 L497.5,573.3 L500.6,573.7 L503.6,574.2 L506.6,574.6 L509.6,574.9 L512.7,575.3 L515.7,575.7 L518.7,576.0 L521.8,576.3 L524.8,576.6 L527.8,576.9 L530.9,577.1 L533.9,577.3 L536.9,577.5 L539.9,577.7 L543.0,577.9 L546.0,578.0 L549.0,578.1 L552.1,578.2 L555.1,578.2 L558.2,578.3 L561.2,578.3 L564.3,578.2 L567.3,578.2 L570.3,578.1 L573.4,578.0 L576.4,577.8 L579.5,577.7 L582.5,577.5 L585.6,577.3 L588.6,577.0 L591.7,576.7 L594.7,576.4 L597.7,576.1 L600.8,575.7 L603.8,575.3 L606.9,574.9 L609.9,574.4 L613.0,573.9 L616.0,573.4 L619.0,572.9 L622.0,572.3 L625.0,571.7 L628.0,571.0 L631.0,570.4 L634.0,569.7 L637.0,568.9 L640.0,568.2 L643.0,567.4 L646.0,566.5 L649.0,565.7 L652.0,564.8 L655.0,563.9 L658.0,562.9 L661.0,561.9 L664.0,560.8 L667.0,559.8 L670.0,558.7 L673.0,557.5 L676.0,556.3 L679.0,555.1 L682.0,553.9 L685.0,552.6 L688.0,551.2 L691.0,549.9 L694.0,548.4 L697.0,547.0 L700.0,545.5 L703.1,543.9 L706.3,542.2 L709.4,540.6 L712.6,538.8 L715.7,537.1 L718.9,535.3 L722.0,533.5 L725.2,531.7 L728.3,529.9 L731.5,528.1 L734.6,526.2 L737.8,524.4 L740.9,522.5 L744.1,520.7 L747.2,518.9 L750.4,517.0 L753.5,515.2 L756.7,513.5 L759.8,511.7 L762.8,510.0 L765.9,508.4 L768.9,506.8 L772.0,505.2 L775.0,503.6 L778.0,502.1 L781.1,500.5 L784.1,499.1 L787.2,497.6 L790.2,496.2 L793.2,494.8 L796.3,493.4 L799.3,492.1 L802.3,490.8 L805.4,489.5 L808.4,488.2 L811.5,487.0 L814.5,485.8 L817.5,484.6 L820.6,483.5 L823.6,482.4 L826.7,481.3 L829.7,480.3 L832.7,479.3 L835.8,478.3 L838.8,477.4 L841.8,476.5 L844.9,475.6 L847.9,474.7 L850.9,473.9 L854.0,473.1 L857.0,472.3 L860.0,471.5 L863.1,470.8 L866.1,470.0 L869.2,469.3 L872.2,468.6 L875.2,467.9 L878.3,467.2 L881.3,466.6 L884.3,465.9 L887.4,465.3 L890.4,464.7 L893.4,464.0 L896.5,463.4 L899.5,462.8 L902.5,462.2 L905.5,461.6 L908.6,461.0 L911.6,460.4 L914.6,459.8 L917.6,459.2 L920.7,458.6 L923.7,458.1 L926.7,457.5 L929.8,457.0 L932.8,456.5 L935.8,455.9 L938.8,455.4 L941.9,455.0 L944.9,454.5 L947.9,454.0 L950.9,453.6 L954.0,453.2 L957.0,452.8 L960.0,452.4 L963.1,452.0 L966.2,451.7 L969.3,451.4 L972.4,451.1 L975.5,450.8 L978.6,450.6 L981.8,450.4 L984.9,450.2 L988.0,450.1 L991.1,450.0 L994.2,449.9 L997.3,449.9 L1000.4,449.9 L1003.5,450.0 L1006.6,450.1 L1009.8,450.3 L1012.9,450.5 L1016.0,450.7 L1019.1,451.0 L1022.2,451.3 L1025.4,451.6 L1028.5,452.0 L1031.6,452.4 L1034.8,452.8 L1037.9,453.3 L1041.0,453.7 L1044.1,454.2 L1047.2,454.8 L1050.4,455.3 L1053.5,455.8 L1056.6,456.4 L1059.8,457.0 L1062.9,457.6 L1066.0,458.2 L1069.0,458.8 L1072.0,459.4 L1075.0,460.0 L1078.0,460.6 L1081.0,461.2 L1084.0,461.8 L1087.0,462.4 L1090.0,463.0 L1093.0,463.6 L1096.0,464.2 L1099.0,464.7 L1102.0,465.3 L1105.0,465.9 L1108.0,466.4 L1111.0,467.0 L1114.0,467.5 L1117.0,468.0 L1120.0,468.5 L1123.0,469.0 L1126.0,469.5 L1129.0,469.9 L1132.0,470.3 L1135.0,470.7 L1138.0,471.1 L1141.0,471.5 L1144.0,471.8 L1147.0,472.1 L1150.0,472.4 L1153.0,472.6 L1156.0,472.8 L1159.0,473.0 L1162.0,473.1 L1165.0,473.2 L1168.0,473.3 L1171.0,473.3 L1174.1,473.3 L1177.1,473.2 L1180.2,473.1 L1183.2,473.0 L1186.3,472.8 L1189.4,472.6 L1192.4,472.4 L1195.5,472.1 L1198.6,471.8 L1201.6,471.4 L1204.7,471.1 L1207.8,470.6 L1210.8,470.2 L1213.9,469.7 L1216.9,469.2 L1220.0,468.7 L1223.0,468.1 L1226.1,467.6 L1229.1,467.0 L1232.1,466.4 L1235.2,465.7 L1238.2,465.1 L1241.2,464.4 L1244.2,463.8 L1247.3,463.1 L1250.3,462.4 L1253.3,461.8 L1256.4,461.1 L1259.4,460.4 L1262.4,459.8 L1265.5,459.1 L1268.5,458.5 L1271.5,457.9 L1274.6,457.3 L1277.6,456.7 L1280.6,456.1 L1283.7,455.6 L1286.7,455.1 L1289.7,454.7 L1292.8,454.2 L1295.8,453.9 L1298.8,453.5 L1301.8,453.2 L1304.9,452.9 L1307.9,452.7 L1310.9,452.6 L1314.0,452.5 L1317.0,452.4 L1320.0,452.4 L1323.1,452.5 L1326.1,452.6 L1329.2,452.8 L1332.2,453.0 L1335.2,453.3 L1338.3,453.6 L1341.3,454.0 L1344.3,454.4 L1347.4,454.8 L1350.4,455.3 L1353.5,455.9 L1356.5,456.4 L1359.5,457.0 L1362.6,457.7 L1365.6,458.3 L1368.7,459.0 L1371.7,459.8 L1374.7,460.5 L1377.8,461.3 L1380.8,462.1 L1383.8,462.9 L1386.9,463.7 L1389.9,464.6 L1393.0,465.4 L1396.0,466.3 L1399.0,467.2 L1402.0,468.1 L1405.0,468.9 L1408.0,469.8 L1411.0,470.7 L1414.0,471.7 L1417.0,472.6 L1420.0,473.5 L1423.0,474.5 L1426.0,475.4 L1429.0,476.3 L1432.0,477.3 L1435.0,478.3 L1438.0,479.2 L1441.0,480.2 L1444.0,481.2 L1447.0,482.2 L1450.0,483.1 L1453.0,484.1 L1456.0,485.1 L1459.0,486.1 L1462.0,487.1 L1465.0,488.1 L1468.0,489.1 L1471.0,490.1 L1474.0,491.1 L1477.0,492.1 L1480.0,493.1" fill="none" stroke="#3b86f0" stroke-width="22" opacity="0.08" transform="translate(0,10)" filter="url(#bl)"/></g><path d="M443.0,628.0 L446.1,628.5 L449.2,628.9 L452.2,629.4 L455.3,629.9 L458.4,630.3 L461.5,630.8 L464.5,631.3 L467.6,631.7 L470.7,632.2 L473.8,632.6 L476.8,633.0 L479.9,633.5 L483.0,633.9 L486.1,634.3 L489.2,634.7 L492.2,635.1 L495.3,635.5 L498.4,635.9 L501.5,636.3 L504.5,636.7 L507.6,637.0 L510.7,637.4 L513.8,637.7 L516.8,638.0 L519.9,638.3 L523.0,638.6 L526.1,638.9 L529.1,639.1 L532.2,639.4 L535.2,639.6 L538.3,639.8 L541.3,640.0 L544.4,640.2 L547.4,640.4 L550.5,640.6 L553.6,640.8 L556.6,640.9 L559.7,641.1 L562.7,641.2 L565.8,641.3 L568.8,641.4 L571.9,641.5 L574.9,641.6 L578.0,641.7 L581.0,641.7 L584.1,641.8 L587.2,641.9 L590.2,641.9 L593.3,641.9 L596.3,642.0 L599.4,642.0 L602.4,642.0 L605.5,642.0 L608.5,642.0 L611.6,642.0 L614.6,642.0 L617.7,642.0 L620.7,641.9 L623.8,641.9 L626.8,641.9 L629.9,641.8 L632.9,641.8 L636.0,641.7 L639.0,641.7 L642.1,641.6 L645.1,641.5 L648.2,641.4 L651.2,641.3 L654.3,641.2 L657.3,641.1 L660.4,641.0 L663.4,640.9 L666.5,640.7 L669.5,640.6 L672.6,640.4 L675.6,640.3 L678.7,640.1 L681.7,639.9 L684.8,639.7 L687.8,639.5 L690.9,639.3 L693.9,639.1 L697.0,638.8 L700.0,638.6 L703.1,638.3 L706.1,638.1 L709.2,637.8 L712.3,637.5 L715.4,637.2 L718.4,636.9 L721.5,636.6 L724.6,636.3 L727.7,635.9 L730.7,635.6 L733.8,635.2 L736.9,634.8 L740.0,634.4 L743.0,634.1 L746.1,633.6 L749.2,633.2 L752.3,632.8 L755.3,632.4 L758.4,631.9 L761.5,631.5 L764.6,631.0 L767.6,630.5 L770.7,630.0 L773.8,629.5 L776.9,629.0 L779.9,628.5 L783.0,628.0 L786.0,627.5 L789.0,626.9 L792.0,626.4 L795.0,625.9 L798.0,625.3 L801.0,624.7 L804.0,624.2 L807.0,623.6 L810.0,623.0 L813.0,622.4 L816.0,621.8 L819.0,621.2 L822.0,620.6 L825.0,620.0 L828.0,619.4 L831.0,618.8 L834.0,618.2 L837.0,617.5 L840.0,616.9 L843.0,616.3 L846.0,615.7 L849.0,615.0 L852.0,614.4 L855.0,613.8 L858.0,613.2 L861.0,612.6 L864.0,611.9 L867.0,611.3 L870.0,610.7 L873.0,610.1 L876.0,609.5 L879.0,608.9 L882.0,608.3 L885.0,607.7 L888.0,607.1 L891.0,606.5 L894.0,605.9 L897.0,605.4 L900.0,604.8 L903.0,604.2 L906.0,603.7 L909.0,603.1 L912.0,602.6 L915.0,602.0 L918.0,601.5 L921.0,600.9 L924.0,600.4 L927.0,599.9 L930.0,599.3 L933.0,598.8 L936.0,598.3 L939.0,597.8 L942.0,597.3 L945.0,596.8 L948.0,596.3 L951.0,595.8 L954.0,595.3 L957.0,594.9 L960.0,594.4 L963.1,593.9 L966.1,593.5 L969.2,593.0 L972.3,592.5 L975.4,592.1 L978.4,591.6 L981.5,591.2 L984.6,590.8 L987.7,590.4 L990.7,589.9 L993.8,589.5 L996.9,589.1 L1000.0,588.7 L1003.0,588.3 L1006.1,588.0 L1009.2,587.6 L1012.3,587.2 L1015.3,586.8 L1018.4,586.5 L1021.5,586.1 L1024.6,585.8 L1027.6,585.5 L1030.7,585.1 L1033.8,584.8 L1036.9,584.5 L1039.9,584.2 L1043.0,583.9 L1046.0,583.6 L1049.0,583.3 L1052.0,583.1 L1055.0,582.8 L1058.0,582.6 L1061.0,582.3 L1064.0,582.1 L1067.0,581.8 L1070.0,581.6 L1073.0,581.4 L1076.0,581.2 L1079.0,581.0 L1082.0,580.8 L1085.0,580.6 L1088.0,580.5 L1091.0,580.3 L1094.0,580.2 L1097.0,580.0 L1100.0,579.9 L1103.0,579.8 L1106.0,579.7 L1109.0,579.6 L1112.0,579.5 L1115.0,579.4 L1118.0,579.4 L1121.0,579.3 L1124.0,579.3 L1127.0,579.2 L1130.0,579.2 L1133.0,579.2 L1136.0,579.2 L1139.0,579.2 L1142.0,579.2 L1145.0,579.3 L1148.0,579.3 L1151.0,579.4 L1154.0,579.5 L1157.0,579.6 L1160.0,579.7 L1163.0,579.8 L1166.0,579.9 L1169.0,580.0 L1172.0,580.2 L1175.0,580.3 L1178.0,580.5 L1181.0,580.7 L1184.0,580.8 L1187.0,581.0 L1190.0,581.2 L1193.0,581.5 L1196.0,581.7 L1199.0,581.9 L1202.0,582.2 L1205.0,582.4 L1208.0,582.7 L1211.0,583.0 L1214.0,583.3 L1217.0,583.6 L1220.0,583.9 L1223.1,584.2 L1226.1,584.6 L1229.2,584.9 L1232.3,585.3 L1235.4,585.6 L1238.4,586.0 L1241.5,586.4 L1244.6,586.8 L1247.7,587.2 L1250.7,587.6 L1253.8,588.0 L1256.9,588.5 L1260.0,588.9 L1263.0,589.3 L1266.1,589.8 L1269.2,590.2 L1272.3,590.7 L1275.3,591.1 L1278.4,591.6 L1281.5,592.1 L1284.6,592.6 L1287.6,593.0 L1290.7,593.5 L1293.8,594.0 L1296.9,594.5 L1299.9,595.0 L1303.0,595.5 L1306.0,596.0 L1309.0,596.5 L1312.0,597.0 L1315.0,597.5 L1318.0,598.0 L1321.0,598.5 L1324.0,599.0 L1327.0,599.5 L1330.0,600.0 L1333.0,600.5 L1336.0,601.0 L1339.0,601.5 L1342.0,602.1 L1345.0,602.6 L1348.0,603.1 L1351.0,603.6 L1354.0,604.2 L1357.0,604.7 L1360.0,605.2 L1363.0,605.8 L1366.0,606.3 L1369.0,606.8 L1372.0,607.4 L1375.0,607.9 L1378.0,608.5 L1381.0,609.0 L1384.0,609.6 L1387.0,610.1 L1390.0,610.7 L1393.0,611.2 L1396.0,611.8 L1399.0,612.4 L1402.0,612.9 L1405.0,613.5 L1408.0,614.1 L1411.0,614.6 L1414.0,615.2 L1417.0,615.8 L1420.0,616.3 L1423.0,616.9 L1426.0,617.5 L1429.0,618.1 L1432.0,618.6 L1435.0,619.2 L1438.0,619.8 L1441.0,620.4 L1444.0,621.0 L1447.0,621.5 L1450.0,622.1 L1453.0,622.7 L1456.0,623.3 L1459.0,623.9 L1462.0,624.5 L1465.0,625.1 L1468.0,625.6 L1471.0,626.2 L1474.0,626.8 L1477.0,627.4 L1480.0,628.0" fill="none" stroke="#e0102a" stroke-width="2.4"/><path d="M443.0,626.0 L446.0,625.1 L449.1,624.1 L452.1,623.2 L455.1,622.3 L458.1,621.4 L461.2,620.5 L464.2,619.5 L467.2,618.6 L470.3,617.7 L473.3,616.8 L476.3,615.9 L479.4,615.0 L482.4,614.2 L485.4,613.3 L488.4,612.4 L491.5,611.5 L494.5,610.7 L497.5,609.8 L500.6,609.0 L503.6,608.2 L506.6,607.4 L509.6,606.6 L512.7,605.8 L515.7,605.0 L518.7,604.2 L521.8,603.5 L524.8,602.7 L527.8,602.0 L530.9,601.3 L533.9,600.6 L536.9,599.9 L539.9,599.3 L543.0,598.6 L546.0,598.0 L549.1,597.4 L552.2,596.8 L555.4,596.2 L558.5,595.6 L561.6,595.1 L564.7,594.6 L567.9,594.1 L571.0,593.6 L574.1,593.2 L577.2,592.8 L580.4,592.4 L583.5,592.0 L586.6,591.7 L589.7,591.4 L592.9,591.2 L596.0,590.9 L599.1,590.8 L602.2,590.6 L605.4,590.5 L608.5,590.4 L611.6,590.4 L614.6,590.4 L617.7,590.4 L620.7,590.5 L623.8,590.6 L626.8,590.8 L629.9,591.0 L632.9,591.2 L636.0,591.4 L639.0,591.7 L642.1,592.0 L645.1,592.3 L648.2,592.6 L651.2,593.0 L654.3,593.4 L657.3,593.8 L660.4,594.2 L663.4,594.7 L666.5,595.1 L669.5,595.6 L672.6,596.1 L675.6,596.6 L678.7,597.1 L681.7,597.7 L684.8,598.2 L687.8,598.8 L690.9,599.3 L693.9,599.9 L697.0,600.4 L700.0,601.0 L703.0,601.6 L706.0,602.1 L709.0,602.7 L712.0,603.2 L715.0,603.8 L718.0,604.3 L721.0,604.9 L724.0,605.4 L727.0,606.0 L730.0,606.5 L733.0,607.0 L736.0,607.5 L739.0,608.0 L742.0,608.5 L745.0,609.0 L748.0,609.4 L751.0,609.9 L754.0,610.3 L757.0,610.7 L760.0,611.1 L763.0,611.4 L766.0,611.8 L769.0,612.1 L772.0,612.4 L775.0,612.7 L778.0,613.0 L781.0,613.2 L784.0,613.4 L787.0,613.6 L790.0,613.7 L793.1,613.8 L796.1,613.9 L799.2,613.9 L802.3,614.0 L805.4,614.0 L808.4,613.9 L811.5,613.8 L814.6,613.7 L817.6,613.6 L820.7,613.4 L823.8,613.2 L826.9,613.0 L829.9,612.7 L833.0,612.4 L836.1,612.1 L839.1,611.7 L842.2,611.3 L845.3,610.9 L848.4,610.4 L851.4,609.9 L854.5,609.4 L857.6,608.8 L860.6,608.2 L863.7,607.6 L866.8,607.0 L869.9,606.3 L872.9,605.6 L876.0,604.8 L879.0,604.0 L882.0,603.2 L885.0,602.4 L888.0,601.6 L891.0,600.7 L894.0,599.8 L897.0,598.9 L900.0,598.0 L903.0,597.0 L906.0,596.0 L909.0,595.1 L912.0,594.1 L915.0,593.1 L918.0,592.1 L921.0,591.0 L924.0,590.0 L927.0,589.0 L930.0,588.0 L933.0,586.9 L936.0,585.9 L939.0,584.9 L942.0,583.9 L945.0,582.9 L948.0,581.9 L951.0,580.9 L954.0,579.9 L957.0,578.9 L960.0,578.0 L963.1,577.0 L966.1,576.1 L969.2,575.2 L972.3,574.3 L975.4,573.4 L978.4,572.6 L981.5,571.7 L984.6,570.9 L987.7,570.1 L990.7,569.3 L993.8,568.5 L996.9,567.8 L1000.0,567.0 L1003.0,566.3 L1006.1,565.6 L1009.2,564.9 L1012.3,564.2 L1015.3,563.6 L1018.4,562.9 L1021.5,562.3 L1024.6,561.7 L1027.6,561.1 L1030.7,560.5 L1033.8,559.9 L1036.9,559.4 L1039.9,558.8 L1043.0,558.3 L1046.0,557.8 L1049.0,557.3 L1052.0,556.8 L1055.0,556.4 L1058.0,555.9 L1061.0,555.5 L1064.0,555.1 L1067.0,554.7 L1070.0,554.3 L1073.0,554.0 L1076.0,553.6 L1079.0,553.3 L1082.0,553.0 L1085.0,552.6 L1088.0,552.4 L1091.0,552.1 L1094.0,551.8 L1097.0,551.6 L1100.0,551.4 L1103.0,551.2 L1106.0,551.0 L1109.0,550.8 L1112.0,550.7 L1115.0,550.5 L1118.0,550.4 L1121.0,550.3 L1124.0,550.2 L1127.0,550.2 L1130.0,550.1 L1133.0,550.1 L1136.0,550.1 L1139.0,550.1 L1142.0,550.1 L1145.0,550.2 L1148.0,550.3 L1151.0,550.4 L1154.0,550.5 L1157.0,550.6 L1160.0,550.7 L1163.0,550.9 L1166.0,551.1 L1169.0,551.2 L1172.0,551.4 L1175.0,551.7 L1178.0,551.9 L1181.0,552.1 L1184.0,552.4 L1187.0,552.7 L1190.0,552.9 L1193.0,553.2 L1196.0,553.6 L1199.0,553.9 L1202.0,554.2 L1205.0,554.5 L1208.0,554.9 L1211.0,555.3 L1214.0,555.6 L1217.0,556.0 L1220.0,556.4 L1223.1,556.8 L1226.1,557.2 L1229.2,557.7 L1232.3,558.1 L1235.4,558.5 L1238.4,559.0 L1241.5,559.5 L1244.6,560.0 L1247.7,560.5 L1250.7,561.0 L1253.8,561.5 L1256.9,562.0 L1260.0,562.6 L1263.0,563.2 L1266.1,563.7 L1269.2,564.4 L1272.3,565.0 L1275.3,565.6 L1278.4,566.3 L1281.5,567.0 L1284.6,567.7 L1287.6,568.4 L1290.7,569.1 L1293.8,569.9 L1296.9,570.7 L1299.9,571.5 L1303.0,572.3 L1306.0,573.1 L1309.0,574.0 L1312.0,574.9 L1315.0,575.8 L1318.0,576.7 L1321.0,577.6 L1324.0,578.5 L1327.0,579.5 L1330.0,580.5 L1333.0,581.4 L1336.0,582.4 L1339.0,583.4 L1342.0,584.4 L1345.0,585.4 L1348.0,586.5 L1351.0,587.5 L1354.0,588.5 L1357.0,589.5 L1360.0,590.6 L1363.0,591.6 L1366.0,592.6 L1369.0,593.6 L1372.0,594.7 L1375.0,595.7 L1378.0,596.7 L1381.0,597.7 L1384.0,598.7 L1387.0,599.6 L1390.0,600.6 L1393.0,601.6 L1396.0,602.5 L1399.0,603.4 L1402.0,604.3 L1405.0,605.2 L1408.0,606.1 L1411.0,607.0 L1414.0,607.8 L1417.0,608.7 L1420.0,609.5 L1423.0,610.3 L1426.0,611.1 L1429.0,611.9 L1432.0,612.7 L1435.0,613.5 L1438.0,614.3 L1441.0,615.1 L1444.0,615.8 L1447.0,616.6 L1450.0,617.3 L1453.0,618.1 L1456.0,618.8 L1459.0,619.5 L1462.0,620.3 L1465.0,621.0 L1468.0,621.7 L1471.0,622.4 L1474.0,623.2 L1477.0,623.9 L1480.0,624.6" fill="none" stroke="#a9a9b0" stroke-width="2.4"/><path d="M443.0,480.3 L446.0,481.2 L449.0,482.0 L452.0,482.9 L455.0,483.7 L458.0,484.6 L461.0,485.4 L464.0,486.3 L467.0,487.1 L470.0,487.9 L473.0,488.8 L476.0,489.6 L479.0,490.4 L482.0,491.2 L485.0,492.1 L488.0,492.9 L491.0,493.6 L494.0,494.4 L497.0,495.2 L500.0,496.0 L503.0,496.7 L506.0,497.5 L509.0,498.2 L512.0,498.9 L515.0,499.6 L518.0,500.3 L521.0,501.0 L524.0,501.7 L527.0,502.4 L530.0,503.0 L533.1,503.6 L536.1,504.3 L539.2,504.9 L542.3,505.5 L545.4,506.0 L548.4,506.6 L551.5,507.1 L554.6,507.7 L557.6,508.2 L560.7,508.7 L563.8,509.1 L566.9,509.6 L569.9,510.0 L573.0,510.4 L576.1,510.8 L579.1,511.2 L582.2,511.5 L585.3,511.9 L588.4,512.2 L591.4,512.5 L594.5,512.7 L597.6,513.0 L600.6,513.2 L603.7,513.4 L606.8,513.6 L609.9,513.7 L612.9,513.9 L616.0,514.0 L619.0,514.1 L622.0,514.2 L625.0,514.2 L628.0,514.2 L631.0,514.2 L634.0,514.2 L637.0,514.1 L640.0,514.1 L643.0,514.0 L646.0,513.8 L649.0,513.7 L652.0,513.5 L655.0,513.3 L658.0,513.0 L661.0,512.7 L664.0,512.4 L667.0,512.1 L670.0,511.7 L673.0,511.3 L676.0,510.8 L679.0,510.4 L682.0,509.8 L685.0,509.3 L688.0,508.7 L691.0,508.1 L694.0,507.4 L697.0,506.7 L700.0,506.0 L703.1,505.2 L706.3,504.3 L709.4,503.4 L712.6,502.5 L715.7,501.6 L718.9,500.6 L722.0,499.6 L725.2,498.7 L728.3,497.7 L731.5,496.7 L734.6,495.7 L737.8,494.7 L740.9,493.7 L744.1,492.8 L747.2,491.9 L750.4,491.0 L753.5,490.1 L756.7,489.3 L759.8,488.5 L762.8,487.8 L765.9,487.1 L768.9,486.5 L772.0,485.9 L775.0,485.3 L778.0,484.8 L781.1,484.3 L784.1,483.9 L787.2,483.5 L790.2,483.1 L793.2,482.7 L796.3,482.4 L799.3,482.1 L802.3,481.8 L805.4,481.6 L808.4,481.4 L811.5,481.2 L814.5,481.0 L817.5,480.8 L820.6,480.7 L823.6,480.5 L826.7,480.4 L829.7,480.3 L832.7,480.2 L835.8,480.1 L838.8,480.1 L841.8,480.0 L844.9,479.9 L847.9,479.9 L850.9,479.9 L854.0,479.8 L857.0,479.8 L860.0,479.8 L863.1,479.8 L866.1,479.8 L869.2,479.9 L872.2,479.9 L875.2,479.9 L878.3,479.9 L881.3,480.0 L884.3,480.0 L887.4,480.1 L890.4,480.1 L893.4,480.2 L896.5,480.2 L899.5,480.3 L902.5,480.4 L905.5,480.4 L908.6,480.5 L911.6,480.6 L914.6,480.7 L917.6,480.7 L920.7,480.8 L923.7,480.9 L926.7,481.0 L929.8,481.1 L932.8,481.2 L935.8,481.4 L938.8,481.5 L941.9,481.6 L944.9,481.8 L947.9,481.9 L950.9,482.1 L954.0,482.2 L957.0,482.4 L960.0,482.6 L963.1,482.8 L966.1,483.0 L969.2,483.2 L972.3,483.5 L975.4,483.7 L978.4,484.0 L981.5,484.3 L984.6,484.6 L987.7,484.9 L990.7,485.2 L993.8,485.5 L996.9,485.9 L1000.0,486.2 L1003.0,486.6 L1006.1,487.0 L1009.2,487.4 L1012.3,487.8 L1015.3,488.3 L1018.4,488.8 L1021.5,489.2 L1024.6,489.7 L1027.6,490.2 L1030.7,490.8 L1033.8,491.3 L1036.9,491.9 L1039.9,492.5 L1043.0,493.1 L1046.0,493.7 L1049.0,494.3 L1052.0,495.0 L1055.0,495.7 L1058.0,496.3 L1061.0,497.0 L1064.0,497.8 L1067.0,498.5 L1070.0,499.2 L1073.0,500.0 L1076.0,500.7 L1079.0,501.5 L1082.0,502.3 L1085.0,503.0 L1088.0,503.8 L1091.0,504.6 L1094.0,505.4 L1097.0,506.2 L1100.0,507.0 L1103.0,507.8 L1106.0,508.6 L1109.0,509.4 L1112.0,510.2 L1115.0,511.0 L1118.0,511.8 L1121.0,512.6 L1124.0,513.3 L1127.0,514.1 L1130.0,514.9 L1133.0,515.6 L1136.0,516.4 L1139.0,517.1 L1142.0,517.9 L1145.0,518.6 L1148.0,519.3 L1151.0,520.0 L1154.0,520.7 L1157.0,521.4 L1160.0,522.0 L1163.0,522.7 L1166.0,523.3 L1169.0,524.0 L1172.0,524.6 L1175.0,525.2 L1178.0,525.8 L1181.0,526.4 L1184.0,527.0 L1187.0,527.5 L1190.0,528.1 L1193.0,528.6 L1196.0,529.2 L1199.0,529.7 L1202.0,530.2 L1205.0,530.7 L1208.0,531.2 L1211.0,531.7 L1214.0,532.1 L1217.0,532.6 L1220.0,533.0 L1223.1,533.4 L1226.1,533.9 L1229.2,534.3 L1232.2,534.7 L1235.3,535.0 L1238.3,535.4 L1241.4,535.7 L1244.4,536.1 L1247.5,536.4 L1250.5,536.7 L1253.6,537.0 L1256.7,537.3 L1259.7,537.5 L1262.8,537.8 L1265.8,538.0 L1268.9,538.2 L1271.9,538.4 L1275.0,538.6 L1278.0,538.7 L1281.1,538.8 L1284.2,539.0 L1287.2,539.1 L1290.3,539.1 L1293.3,539.2 L1296.4,539.2 L1299.4,539.2 L1302.5,539.2 L1305.5,539.2 L1308.6,539.2 L1311.6,539.1 L1314.7,539.0 L1317.7,538.9 L1320.7,538.8 L1323.7,538.6 L1326.7,538.4 L1329.8,538.2 L1332.8,538.0 L1335.8,537.8 L1338.8,537.5 L1341.8,537.3 L1344.8,537.0 L1347.8,536.7 L1350.8,536.4 L1353.8,536.1 L1356.9,535.7 L1359.9,535.4 L1362.9,535.0 L1365.9,534.6 L1368.9,534.3 L1371.9,533.9 L1374.9,533.5 L1377.9,533.0 L1380.9,532.6 L1384.0,532.2 L1387.0,531.8 L1390.0,531.3 L1393.0,530.9 L1396.0,530.4 L1399.0,529.9 L1402.0,529.5 L1405.0,529.0 L1408.0,528.5 L1411.0,528.1 L1414.0,527.6 L1417.0,527.1 L1420.0,526.6 L1423.0,526.1 L1426.0,525.6 L1429.0,525.1 L1432.0,524.6 L1435.0,524.1 L1438.0,523.6 L1441.0,523.1 L1444.0,522.6 L1447.0,522.1 L1450.0,521.6 L1453.0,521.1 L1456.0,520.6 L1459.0,520.0 L1462.0,519.5 L1465.0,519.0 L1468.0,518.5 L1471.0,518.0 L1474.0,517.4 L1477.0,516.9 L1480.0,516.4" fill="none" stroke="#0c8585" stroke-width="2.4"/><path d="M443.0,589.0 L446.1,588.1 L449.2,587.2 L452.2,586.3 L455.3,585.4 L458.4,584.5 L461.5,583.6 L464.5,582.8 L467.6,581.9 L470.7,581.0 L473.8,580.0 L476.8,579.1 L479.9,578.2 L483.0,577.3 L486.1,576.4 L489.2,575.5 L492.2,574.6 L495.3,573.6 L498.4,572.7 L501.5,571.8 L504.5,570.8 L507.6,569.9 L510.7,568.9 L513.8,567.9 L516.8,567.0 L519.9,566.0 L523.0,565.0 L526.0,564.0 L529.0,563.1 L532.0,562.1 L535.0,561.1 L538.0,560.1 L541.0,559.1 L544.0,558.1 L547.0,557.1 L550.0,556.1 L553.0,555.1 L556.0,554.1 L559.0,553.1 L562.0,552.2 L565.0,551.2 L568.0,550.2 L571.0,549.2 L574.0,548.2 L577.0,547.2 L580.0,546.3 L583.0,545.3 L586.0,544.4 L589.0,543.4 L592.0,542.5 L595.0,541.6 L598.0,540.7 L601.0,539.8 L604.0,538.9 L607.0,538.0 L610.0,537.2 L613.0,536.3 L616.0,535.5 L619.0,534.7 L622.0,533.9 L625.0,533.1 L628.0,532.4 L631.0,531.6 L634.0,530.9 L637.0,530.2 L640.0,529.5 L643.0,528.8 L646.0,528.1 L649.0,527.5 L652.0,526.9 L655.0,526.2 L658.0,525.6 L661.0,525.0 L664.0,524.5 L667.0,523.9 L670.0,523.4 L673.0,522.8 L676.0,522.3 L679.0,521.8 L682.0,521.3 L685.0,520.9 L688.0,520.4 L691.0,520.0 L694.0,519.5 L697.0,519.1 L700.0,518.7 L703.1,518.3 L706.1,517.9 L709.2,517.5 L712.3,517.2 L715.4,516.8 L718.4,516.5 L721.5,516.2 L724.6,515.9 L727.7,515.6 L730.7,515.3 L733.8,515.1 L736.9,514.8 L740.0,514.6 L743.0,514.4 L746.1,514.2 L749.2,514.0 L752.3,513.8 L755.3,513.6 L758.4,513.5 L761.5,513.4 L764.6,513.3 L767.6,513.2 L770.7,513.1 L773.8,513.0 L776.9,513.0 L779.9,512.9 L783.0,512.9 L786.0,512.9 L789.1,512.9 L792.1,512.9 L795.2,513.0 L798.2,513.0 L801.3,513.1 L804.3,513.2 L807.3,513.3 L810.4,513.4 L813.4,513.5 L816.5,513.6 L819.5,513.8 L822.6,513.9 L825.6,514.1 L828.7,514.3 L831.7,514.5 L834.7,514.8 L837.8,515.0 L840.8,515.2 L843.9,515.5 L846.9,515.8 L850.0,516.1 L853.0,516.4 L856.0,516.7 L859.1,517.1 L862.1,517.4 L865.1,517.8 L868.2,518.2 L871.2,518.6 L874.2,519.0 L877.3,519.4 L880.3,519.8 L883.3,520.3 L886.4,520.8 L889.4,521.3 L892.5,521.8 L895.5,522.3 L898.5,522.9 L901.6,523.4 L904.6,524.0 L907.6,524.6 L910.7,525.3 L913.7,525.9 L916.7,526.6 L919.8,527.3 L922.8,528.0 L925.9,528.7 L929.0,529.5 L932.1,530.3 L935.2,531.1 L938.3,531.9 L941.4,532.7 L944.5,533.5 L947.6,534.3 L950.7,535.1 L953.8,535.8 L956.9,536.6 L960.0,537.3 L963.1,538.0 L966.1,538.7 L969.2,539.3 L972.3,539.9 L975.4,540.5 L978.4,541.1 L981.5,541.7 L984.6,542.2 L987.7,542.7 L990.7,543.2 L993.8,543.7 L996.9,544.2 L1000.0,544.7 L1003.0,545.2 L1006.1,545.7 L1009.2,546.1 L1012.3,546.6 L1015.3,547.0 L1018.4,547.5 L1021.5,547.9 L1024.6,548.4 L1027.6,548.9 L1030.7,549.3 L1033.8,549.8 L1036.9,550.3 L1039.9,550.8 L1043.0,551.3 L1046.0,551.8 L1049.0,552.3 L1052.0,552.9 L1055.0,553.4 L1058.0,553.9 L1061.0,554.5 L1064.0,555.1 L1067.0,555.7 L1070.0,556.2 L1073.0,556.8 L1076.0,557.5 L1079.0,558.1 L1082.0,558.7 L1085.0,559.3 L1088.0,560.0 L1091.0,560.6 L1094.0,561.3 L1097.0,561.9 L1100.0,562.6 L1103.0,563.3 L1106.0,564.0 L1109.0,564.6 L1112.0,565.3 L1115.0,566.0 L1118.0,566.7 L1121.0,567.4 L1124.0,568.1 L1127.0,568.9 L1130.0,569.6 L1133.0,570.3 L1136.0,571.0 L1139.0,571.7 L1142.0,572.4 L1145.0,573.2 L1148.0,573.9 L1151.0,574.6 L1154.0,575.3 L1157.0,576.1 L1160.0,576.8 L1163.0,577.5 L1166.0,578.2 L1169.0,578.9 L1172.0,579.6 L1175.0,580.3 L1178.0,581.0 L1181.0,581.7 L1184.0,582.4 L1187.0,583.0 L1190.0,583.7 L1193.0,584.3 L1196.0,585.0 L1199.0,585.6 L1202.0,586.2 L1205.0,586.9 L1208.0,587.4 L1211.0,588.0 L1214.0,588.6 L1217.0,589.2 L1220.0,589.7 L1223.0,590.2 L1226.1,590.7 L1229.1,591.2 L1232.1,591.7 L1235.1,592.2 L1238.2,592.7 L1241.2,593.1 L1244.2,593.5 L1247.3,593.9 L1250.3,594.3 L1253.3,594.7 L1256.3,595.1 L1259.4,595.4 L1262.4,595.8 L1265.4,596.1 L1268.5,596.4 L1271.5,596.7 L1274.5,597.0 L1277.5,597.2 L1280.6,597.5 L1283.6,597.7 L1286.6,597.9 L1289.7,598.2 L1292.7,598.4 L1295.7,598.5 L1298.7,598.7 L1301.8,598.9 L1304.8,599.0 L1307.8,599.2 L1310.9,599.3 L1313.9,599.4 L1316.9,599.5 L1319.9,599.6 L1323.0,599.6 L1326.0,599.7 L1329.0,599.7 L1332.1,599.8 L1335.1,599.8 L1338.2,599.8 L1341.2,599.8 L1344.3,599.8 L1347.3,599.8 L1350.3,599.8 L1353.4,599.7 L1356.4,599.6 L1359.5,599.6 L1362.5,599.5 L1365.6,599.4 L1368.6,599.3 L1371.7,599.2 L1374.7,599.1 L1377.7,598.9 L1380.8,598.8 L1383.8,598.6 L1386.9,598.5 L1389.9,598.3 L1393.0,598.1 L1396.0,597.9 L1399.0,597.7 L1402.0,597.5 L1405.0,597.3 L1408.0,597.0 L1411.0,596.8 L1414.0,596.5 L1417.0,596.3 L1420.0,596.0 L1423.0,595.7 L1426.0,595.5 L1429.0,595.2 L1432.0,594.9 L1435.0,594.6 L1438.0,594.3 L1441.0,594.0 L1444.0,593.7 L1447.0,593.4 L1450.0,593.0 L1453.0,592.7 L1456.0,592.4 L1459.0,592.1 L1462.0,591.7 L1465.0,591.4 L1468.0,591.1 L1471.0,590.7 L1474.0,590.4 L1477.0,590.0 L1480.0,589.7" fill="none" stroke="#ff9410" stroke-width="2.4"/><path d="M443.0,564.0 L446.0,564.6 L449.1,565.1 L452.1,565.7 L455.1,566.2 L458.1,566.8 L461.2,567.3 L464.2,567.9 L467.2,568.4 L470.3,568.9 L473.3,569.5 L476.3,570.0 L479.4,570.5 L482.4,571.0 L485.4,571.5 L488.4,571.9 L491.5,572.4 L494.5,572.9 L497.5,573.3 L500.6,573.7 L503.6,574.2 L506.6,574.6 L509.6,574.9 L512.7,575.3 L515.7,575.7 L518.7,576.0 L521.8,576.3 L524.8,576.6 L527.8,576.9 L530.9,577.1 L533.9,577.3 L536.9,577.5 L539.9,577.7 L543.0,577.9 L546.0,578.0 L549.0,578.1 L552.1,578.2 L555.1,578.2 L558.2,578.3 L561.2,578.3 L564.3,578.2 L567.3,578.2 L570.3,578.1 L573.4,578.0 L576.4,577.8 L579.5,577.7 L582.5,577.5 L585.6,577.3 L588.6,577.0 L591.7,576.7 L594.7,576.4 L597.7,576.1 L600.8,575.7 L603.8,575.3 L606.9,574.9 L609.9,574.4 L613.0,573.9 L616.0,573.4 L619.0,572.9 L622.0,572.3 L625.0,571.7 L628.0,571.0 L631.0,570.4 L634.0,569.7 L637.0,568.9 L640.0,568.2 L643.0,567.4 L646.0,566.5 L649.0,565.7 L652.0,564.8 L655.0,563.9 L658.0,562.9 L661.0,561.9 L664.0,560.8 L667.0,559.8 L670.0,558.7 L673.0,557.5 L676.0,556.3 L679.0,555.1 L682.0,553.9 L685.0,552.6 L688.0,551.2 L691.0,549.9 L694.0,548.4 L697.0,547.0 L700.0,545.5 L703.1,543.9 L706.3,542.2 L709.4,540.6 L712.6,538.8 L715.7,537.1 L718.9,535.3 L722.0,533.5 L725.2,531.7 L728.3,529.9 L731.5,528.1 L734.6,526.2 L737.8,524.4 L740.9,522.5 L744.1,520.7 L747.2,518.9 L750.4,517.0 L753.5,515.2 L756.7,513.5 L759.8,511.7 L762.8,510.0 L765.9,508.4 L768.9,506.8 L772.0,505.2 L775.0,503.6 L778.0,502.1 L781.1,500.5 L784.1,499.1 L787.2,497.6 L790.2,496.2 L793.2,494.8 L796.3,493.4 L799.3,492.1 L802.3,490.8 L805.4,489.5 L808.4,488.2 L811.5,487.0 L814.5,485.8 L817.5,484.6 L820.6,483.5 L823.6,482.4 L826.7,481.3 L829.7,480.3 L832.7,479.3 L835.8,478.3 L838.8,477.4 L841.8,476.5 L844.9,475.6 L847.9,474.7 L850.9,473.9 L854.0,473.1 L857.0,472.3 L860.0,471.5 L863.1,470.8 L866.1,470.0 L869.2,469.3 L872.2,468.6 L875.2,467.9 L878.3,467.2 L881.3,466.6 L884.3,465.9 L887.4,465.3 L890.4,464.7 L893.4,464.0 L896.5,463.4 L899.5,462.8 L902.5,462.2 L905.5,461.6 L908.6,461.0 L911.6,460.4 L914.6,459.8 L917.6,459.2 L920.7,458.6 L923.7,458.1 L926.7,457.5 L929.8,457.0 L932.8,456.5 L935.8,455.9 L938.8,455.4 L941.9,455.0 L944.9,454.5 L947.9,454.0 L950.9,453.6 L954.0,453.2 L957.0,452.8 L960.0,452.4 L963.1,452.0 L966.2,451.7 L969.3,451.4 L972.4,451.1 L975.5,450.8 L978.6,450.6 L981.8,450.4 L984.9,450.2 L988.0,450.1 L991.1,450.0 L994.2,449.9 L997.3,449.9 L1000.4,449.9 L1003.5,450.0 L1006.6,450.1 L1009.8,450.3 L1012.9,450.5 L1016.0,450.7 L1019.1,451.0 L1022.2,451.3 L1025.4,451.6 L1028.5,452.0 L1031.6,452.4 L1034.8,452.8 L1037.9,453.3 L1041.0,453.7 L1044.1,454.2 L1047.2,454.8 L1050.4,455.3 L1053.5,455.8 L1056.6,456.4 L1059.8,457.0 L1062.9,457.6 L1066.0,458.2 L1069.0,458.8 L1072.0,459.4 L1075.0,460.0 L1078.0,460.6 L1081.0,461.2 L1084.0,461.8 L1087.0,462.4 L1090.0,463.0 L1093.0,463.6 L1096.0,464.2 L1099.0,464.7 L1102.0,465.3 L1105.0,465.9 L1108.0,466.4 L1111.0,467.0 L1114.0,467.5 L1117.0,468.0 L1120.0,468.5 L1123.0,469.0 L1126.0,469.5 L1129.0,469.9 L1132.0,470.3 L1135.0,470.7 L1138.0,471.1 L1141.0,471.5 L1144.0,471.8 L1147.0,472.1 L1150.0,472.4 L1153.0,472.6 L1156.0,472.8 L1159.0,473.0 L1162.0,473.1 L1165.0,473.2 L1168.0,473.3 L1171.0,473.3 L1174.1,473.3 L1177.1,473.2 L1180.2,473.1 L1183.2,473.0 L1186.3,472.8 L1189.4,472.6 L1192.4,472.4 L1195.5,472.1 L1198.6,471.8 L1201.6,471.4 L1204.7,471.1 L1207.8,470.6 L1210.8,470.2 L1213.9,469.7 L1216.9,469.2 L1220.0,468.7 L1223.0,468.1 L1226.1,467.6 L1229.1,467.0 L1232.1,466.4 L1235.2,465.7 L1238.2,465.1 L1241.2,464.4 L1244.2,463.8 L1247.3,463.1 L1250.3,462.4 L1253.3,461.8 L1256.4,461.1 L1259.4,460.4 L1262.4,459.8 L1265.5,459.1 L1268.5,458.5 L1271.5,457.9 L1274.6,457.3 L1277.6,456.7 L1280.6,456.1 L1283.7,455.6 L1286.7,455.1 L1289.7,454.7 L1292.8,454.2 L1295.8,453.9 L1298.8,453.5 L1301.8,453.2 L1304.9,452.9 L1307.9,452.7 L1310.9,452.6 L1314.0,452.5 L1317.0,452.4 L1320.0,452.4 L1323.1,452.5 L1326.1,452.6 L1329.2,452.8 L1332.2,453.0 L1335.2,453.3 L1338.3,453.6 L1341.3,454.0 L1344.3,454.4 L1347.4,454.8 L1350.4,455.3 L1353.5,455.9 L1356.5,456.4 L1359.5,457.0 L1362.6,457.7 L1365.6,458.3 L1368.7,459.0 L1371.7,459.8 L1374.7,460.5 L1377.8,461.3 L1380.8,462.1 L1383.8,462.9 L1386.9,463.7 L1389.9,464.6 L1393.0,465.4 L1396.0,466.3 L1399.0,467.2 L1402.0,468.1 L1405.0,468.9 L1408.0,469.8 L1411.0,470.7 L1414.0,471.7 L1417.0,472.6 L1420.0,473.5 L1423.0,474.5 L1426.0,475.4 L1429.0,476.3 L1432.0,477.3 L1435.0,478.3 L1438.0,479.2 L1441.0,480.2 L1444.0,481.2 L1447.0,482.2 L1450.0,483.1 L1453.0,484.1 L1456.0,485.1 L1459.0,486.1 L1462.0,487.1 L1465.0,488.1 L1468.0,489.1 L1471.0,490.1 L1474.0,491.1 L1477.0,492.1 L1480.0,493.1" fill="none" stroke="#3b86f0" stroke-width="2.4"/></svg>
<div style="position:absolute;left:360px;top:767px;width:1151px;height:347px;background:#f8f8f8;border-radius:12px;overflow:hidden;"></div>
<div style="position:absolute;left:360px;top:767px;width:1151px;height:57px;background:#e4eefe;border-radius:0px;border-radius:12px 12px 0 0;"></div>
<div class="t" style="left:381.3px;top:785.4px;font-size:22px;color:#262626;font-weight:400;letter-spacing:0px;-webkit-text-stroke:0.3px #2a2a2a;">Versions</div>
<div class="t" style="left:912.0px;transform:translateX(-50%);top:785.4px;font-size:22px;color:#262626;font-weight:400;letter-spacing:0px;-webkit-text-stroke:0.3px #2a2a2a;">Total Users</div>
<div class="t" style="left:1131.2px;transform:translateX(-50%);top:785.4px;font-size:22px;color:#262626;font-weight:400;letter-spacing:0px;-webkit-text-stroke:0.3px #2a2a2a;">Crash Free Users</div>
<div class="t" style="left:1401.0px;transform:translateX(-50%);top:785.4px;font-size:22px;color:#262626;font-weight:400;letter-spacing:0px;-webkit-text-stroke:0.3px #2a2a2a;">Affected Users</div>
<svg style="position:absolute;left:380.5px;top:848px;" width="12" height="12" viewBox="0 0 12 12"><circle cx="5.5" cy="5.5" r="5" fill="#e0102a"/></svg>
<div class="t" style="left:402.4px;top:843.0px;font-size:20.3px;color:#2a2a2a;font-weight:400;letter-spacing:0px;-webkit-text-stroke:0.3px #2a2a2a;">v1.1.0.0</div>
<div class="t" style="left:912.0px;transform:translateX(-50%);top:842.3px;font-size:21.2px;color:#2a2a2a;font-weight:400;letter-spacing:0px;-webkit-text-stroke:0.3px #2a2a2a;">89,891</div>
<div class="t" style="right:741.0px;top:842.3px;font-size:21.2px;color:#2a2a2a;font-weight:400;letter-spacing:0px;-webkit-text-stroke:0.3px #2a2a2a;">87,335</div>
<div style="position:absolute;left:1147px;top:838px;width:1.3px;height:32px;background:#e2e2e2;border-radius:0px;"></div>
<div class="t" style="left:1163.4px;top:842.4px;font-size:21px;color:#2a2a2a;font-weight:400;letter-spacing:0px;-webkit-text-stroke:0.3px #2a2a2a;">16%</div>
<div class="t" style="left:1401.0px;transform:translateX(-50%);top:842.3px;font-size:21.2px;color:#2a2a2a;font-weight:400;letter-spacing:0px;-webkit-text-stroke:0.3px #2a2a2a;">81,923</div>
<div style="position:absolute;left:360px;top:882px;width:1151px;height:1.3px;background:#e6e6e6;border-radius:0px;"></div>
<svg style="position:absolute;left:380.5px;top:906px;" width="12" height="12" viewBox="0 0 12 12"><circle cx="5.5" cy="5.5" r="5" fill="#b4b4bc"/></svg>
<div class="t" style="left:402.4px;top:901.3px;font-size:20.3px;color:#2a2a2a;font-weight:400;letter-spacing:0px;-webkit-text-stroke:0.3px #2a2a2a;">v2.0.0.1</div>
<div class="t" style="left:912.0px;transform:translateX(-50%);top:900.6px;font-size:21.2px;color:#2a2a2a;font-weight:400;letter-spacing:0px;-webkit-text-stroke:0.3px #2a2a2a;">48,719</div>
<div class="t" style="right:741.0px;top:900.6px;font-size:21.2px;color:#2a2a2a;font-weight:400;letter-spacing:0px;-webkit-text-stroke:0.3px #2a2a2a;">855,545</div>
<div style="position:absolute;left:1147px;top:896px;width:1.3px;height:32px;background:#e2e2e2;border-radius:0px;"></div>
<div class="t" style="left:1163.4px;top:900.7px;font-size:21px;color:#2a2a2a;font-weight:400;letter-spacing:0px;-webkit-text-stroke:0.3px #2a2a2a;">39%</div>
<div class="t" style="left:1401.0px;transform:translateX(-50%);top:900.6px;font-size:21.2px;color:#2a2a2a;font-weight:400;letter-spacing:0px;-webkit-text-stroke:0.3px #2a2a2a;">38,023</div>
<div style="position:absolute;left:360px;top:941px;width:1151px;height:1.3px;background:#e6e6e6;border-radius:0px;"></div>
<svg style="position:absolute;left:380.5px;top:965px;" width="12" height="12" viewBox="0 0 12 12"><circle cx="5.5" cy="5.5" r="5" fill="#0c8585"/></svg>
<div class="t" style="left:402.4px;top:959.6px;font-size:20.3px;color:#2a2a2a;font-weight:400;letter-spacing:0px;-webkit-text-stroke:0.3px #2a2a2a;">v3.0.1.1</div>
<div class="t" style="left:912.0px;transform:translateX(-50%);top:958.9px;font-size:21.2px;color:#2a2a2a;font-weight:400;letter-spacing:0px;-webkit-text-stroke:0.3px #2a2a2a;">154,045</div>
<div class="t" style="right:741.0px;top:958.9px;font-size:21.2px;color:#2a2a2a;font-weight:400;letter-spacing:0px;-webkit-text-stroke:0.3px #2a2a2a;">825,444</div>
<div style="position:absolute;left:1147px;top:955px;width:1.3px;height:32px;background:#e2e2e2;border-radius:0px;"></div>
<div class="t" style="left:1163.4px;top:959.0px;font-size:21px;color:#2a2a2a;font-weight:400;letter-spacing:0px;-webkit-text-stroke:0.3px #2a2a2a;">25%</div>
<div class="t" style="left:1401.0px;transform:translateX(-50%);top:958.9px;font-size:21.2px;color:#2a2a2a;font-weight:400;letter-spacing:0px;-webkit-text-stroke:0.3px #2a2a2a;">98,056</div>
<div style="position:absolute;left:360px;top:999px;width:1151px;height:1.3px;background:#e6e6e6;border-radius:0px;"></div>
<svg style="position:absolute;left:380.5px;top:1023px;" width="12" height="12" viewBox="0 0 12 12"><circle cx="5.5" cy="5.5" r="5" fill="#3b86f0"/></svg>
<div class="t" style="left:402.4px;top:1017.9px;font-size:20.3px;color:#2a2a2a;font-weight:400;letter-spacing:0px;-webkit-text-stroke:0.3px #2a2a2a;">v3.0.4.1</div>
<div class="t" style="left:912.0px;transform:translateX(-50%);top:1017.2px;font-size:21.2px;color:#2a2a2a;font-weight:400;letter-spacing:0px;-webkit-text-stroke:0.3px #2a2a2a;">661,345</div>
<div class="t" style="right:741.0px;top:1017.2px;font-size:21.2px;color:#2a2a2a;font-weight:400;letter-spacing:0px;-webkit-text-stroke:0.3px #2a2a2a;">47,214</div>
<div style="position:absolute;left:1147px;top:1013px;width:1.3px;height:32px;background:#e2e2e2;border-radius:0px;"></div>
<div class="t" style="left:1163.4px;top:1017.3px;font-size:21px;color:#2a2a2a;font-weight:400;letter-spacing:0px;-webkit-text-stroke:0.3px #2a2a2a;">25%</div>
<div class="t" style="left:1401.0px;transform:translateX(-50%);top:1017.2px;font-size:21.2px;color:#2a2a2a;font-weight:400;letter-spacing:0px;-webkit-text-stroke:0.3px #2a2a2a;">96,965</div>
<div style="position:absolute;left:360px;top:1057px;width:1151px;height:1.3px;background:#e6e6e6;border-radius:0px;"></div>
<svg style="position:absolute;left:380.5px;top:1081px;" width="12" height="12" viewBox="0 0 12 12"><circle cx="5.5" cy="5.5" r="5" fill="#ff9410"/></svg>
<div class="t" style="left:402.4px;top:1076.2px;font-size:20.3px;color:#2a2a2a;font-weight:400;letter-spacing:0px;-webkit-text-stroke:0.3px #2a2a2a;">v2.5.0.1</div>
<div class="t" style="left:912.0px;transform:translateX(-50%);top:1075.5px;font-size:21.2px;color:#2a2a2a;font-weight:400;letter-spacing:0px;-webkit-text-stroke:0.3px #2a2a2a;">910,289</div>
<div class="t" style="right:741.0px;top:1075.5px;font-size:21.2px;color:#2a2a2a;font-weight:400;letter-spacing:0px;-webkit-text-stroke:0.3px #2a2a2a;">350,652</div>
<div style="position:absolute;left:1147px;top:1071px;width:1.3px;height:32px;background:#e2e2e2;border-radius:0px;"></div>
<div class="t" style="left:1163.4px;top:1075.6px;font-size:21px;color:#2a2a2a;font-weight:400;letter-spacing:0px;-webkit-text-stroke:0.3px #2a2a2a;">22%</div>
<div class="t" style="left:1401.0px;transform:translateX(-50%);top:1075.5px;font-size:21.2px;color:#2a2a2a;font-weight:400;letter-spacing:0px;-webkit-text-stroke:0.3px #2a2a2a;">82,243</div>
</body></html>
